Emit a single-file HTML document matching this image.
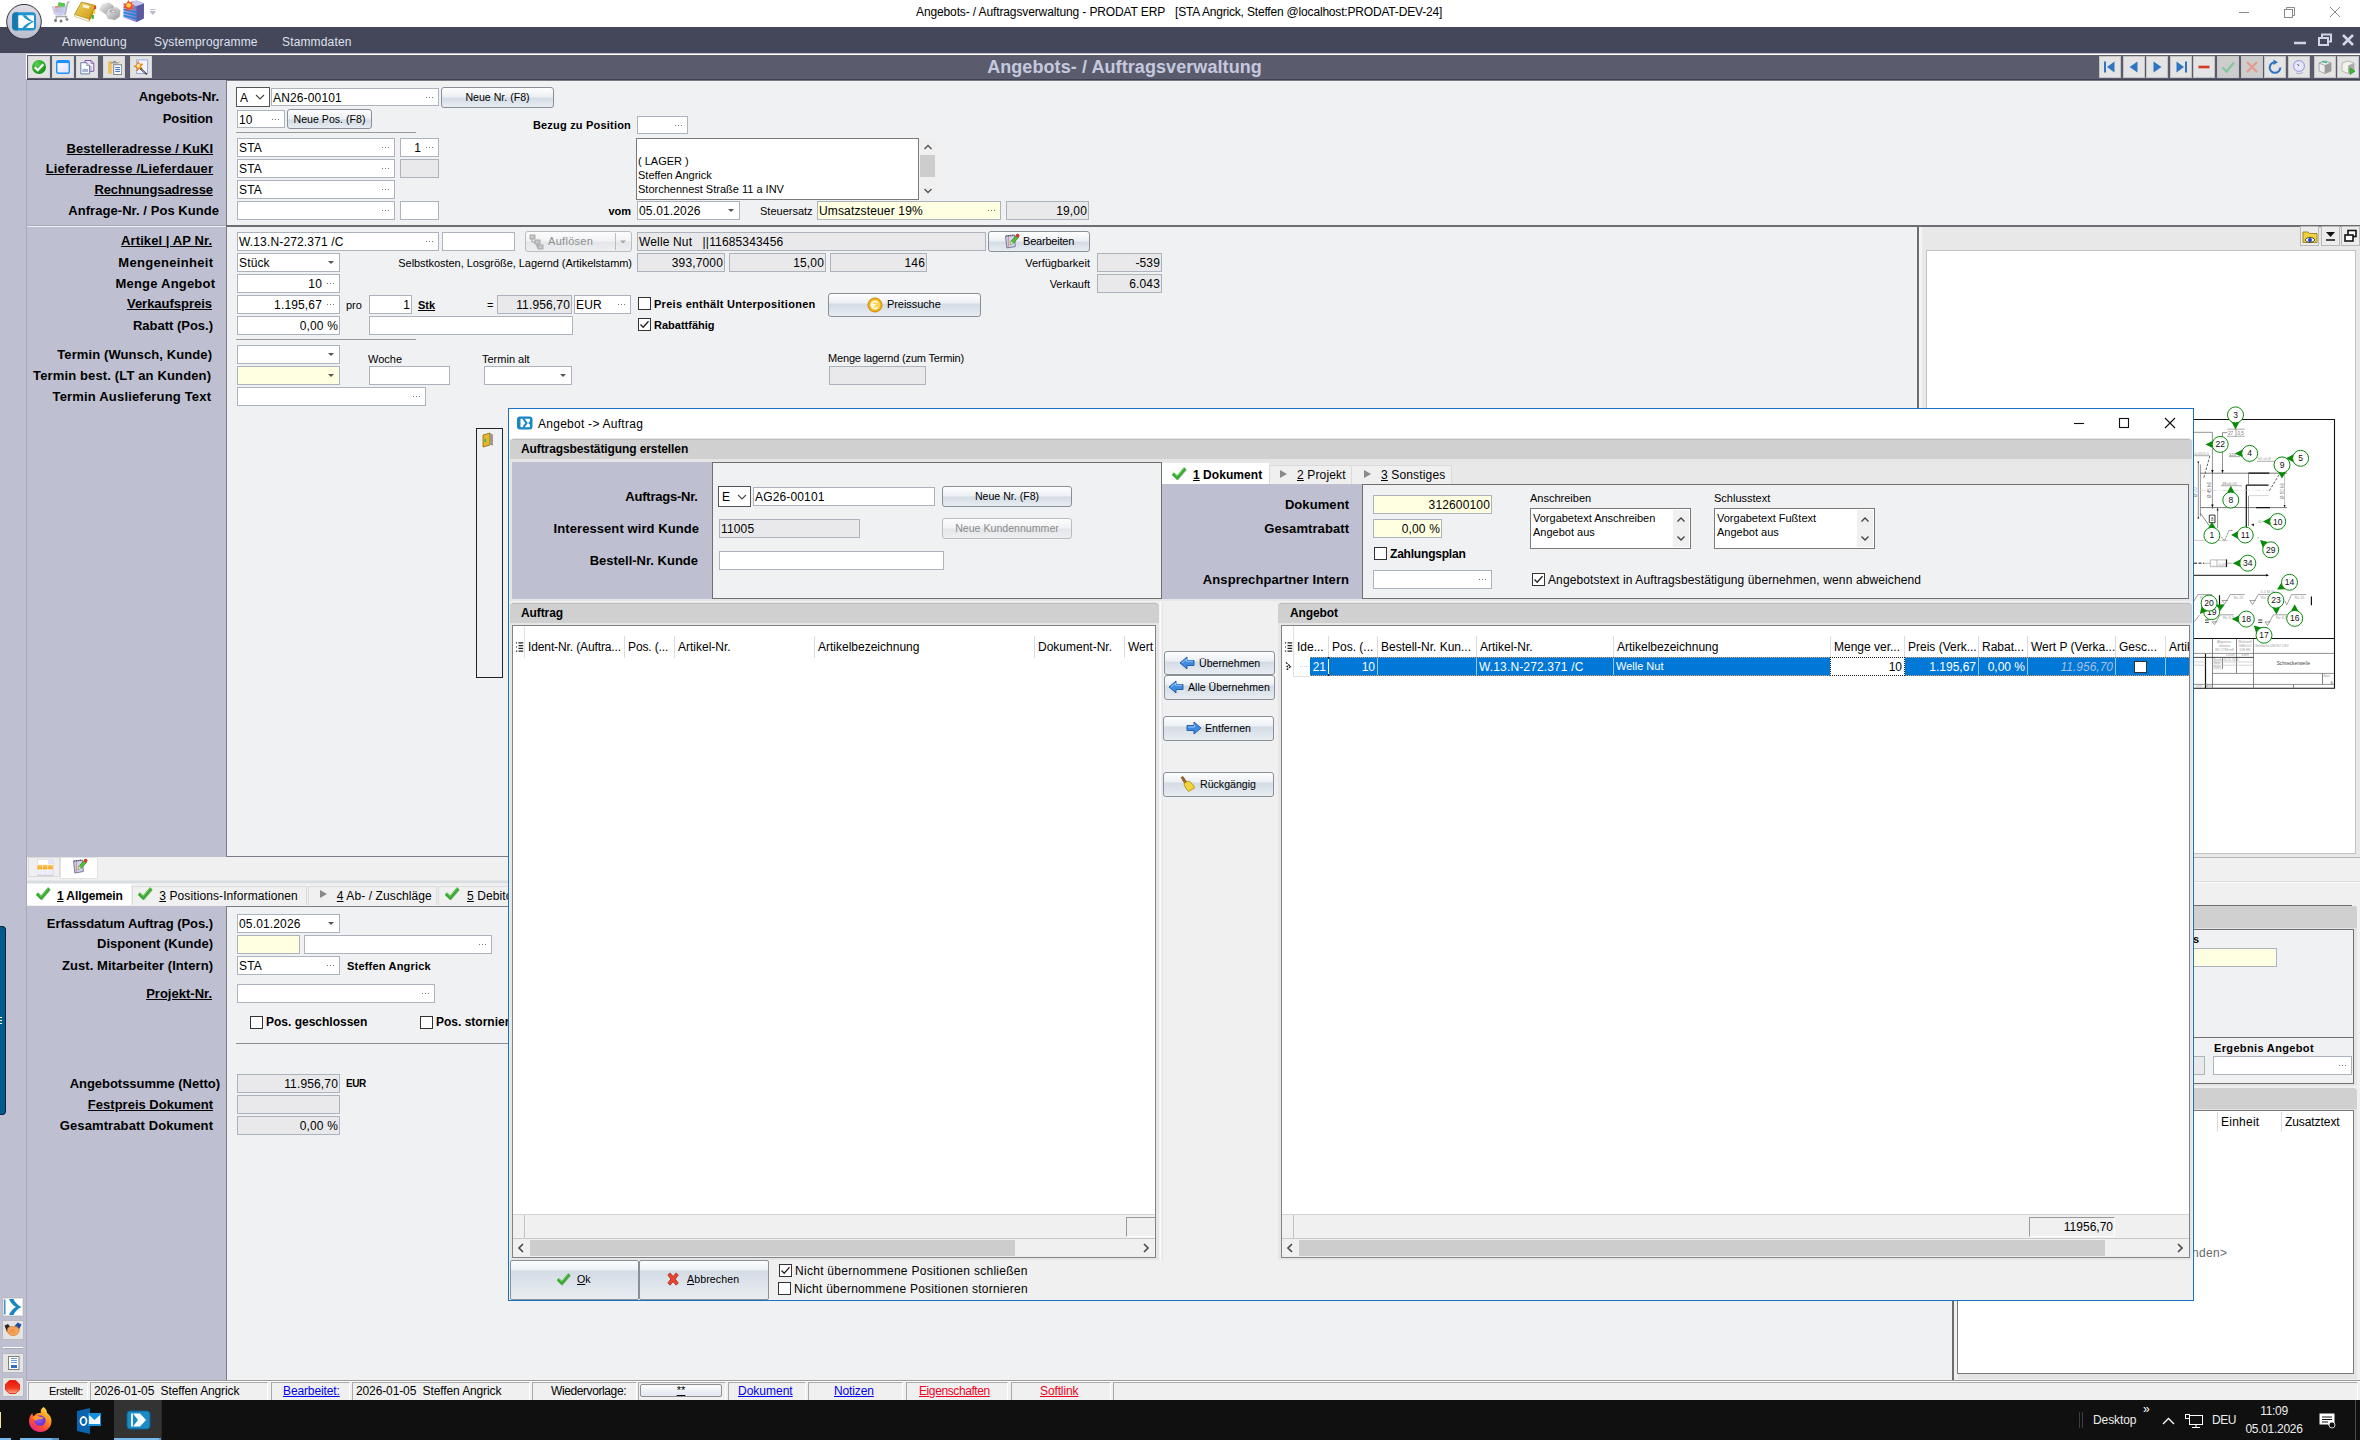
<!DOCTYPE html>
<html lang="de"><head><meta charset="utf-8"><title>Angebots- / Auftragsverwaltung - PRODAT ERP</title><style>
html,body{margin:0;padding:0;}
body{width:2360px;height:1440px;overflow:hidden;position:relative;background:#f0f1f3;font-family:"Liberation Sans",sans-serif;font-size:12px;color:#000;}
div{position:absolute;box-sizing:content-box;}
.btn{border:1px solid #8a9098;border-radius:3px;background:linear-gradient(#fdfefe 0px,#edf0f4 8.5px,#d4dce5 10.5px,#e9edf2 100%);text-align:center;white-space:nowrap;}
u{text-decoration:underline;}
</style></head><body>
<div style="left:0px;top:0px;width:2360px;height:27px;background:#fff"></div>
<div style="top:3px;height:18px;line-height:18px;font-size:12px;white-space:nowrap;left:916px;letter-spacing:-0.122px;">Angebots- / Auftragsverwaltung - PRODAT ERP</div>
<div style="top:3px;height:18px;line-height:18px;font-size:12px;white-space:nowrap;left:1175px;letter-spacing:-0.182px;">[STA Angrick, Steffen @localhost:PRODAT-DEV-24]</div>
<svg style="position:absolute;left:2230px;top:0px" width="120" height="27" viewBox="0 0 120 27"><g stroke="#8a8a8a" stroke-width="1" fill="none"><path d="M9 12.5h10"/><rect x="54.5" y="9.5" width="8" height="8"/><path d="M56.5 9.5v-2h8v8h-2"/><path d="M100 7l10 10M110 7l-10 10"/></g></svg>
<div style="left:0px;top:27px;width:2360px;height:26px;background:#44475a"></div>
<div style="top:33px;height:18px;line-height:18px;font-size:12px;white-space:nowrap;color:#dfe1ee;left:62px;letter-spacing:.15px;">Anwendung</div>
<div style="top:33px;height:18px;line-height:18px;font-size:12px;white-space:nowrap;color:#dfe1ee;left:154px;letter-spacing:.15px;">Systemprogramme</div>
<div style="top:33px;height:18px;line-height:18px;font-size:12px;white-space:nowrap;color:#dfe1ee;left:282px;letter-spacing:.15px;">Stammdaten</div>
<svg style="position:absolute;left:2290px;top:30px" width="70" height="20" viewBox="0 0 70 20"><g fill="none" stroke="#d0d4e8"><path d="M4 13h12" stroke-width="2.5"/><rect x="29" y="8" width="9" height="7" stroke-width="2"/><path d="M32 7v-2.500h9v7h-2" stroke-width="2"/><path d="M53 5l10 10M63 5l-10 10" stroke-width="2.6"/></g></svg>
<div style="left:0px;top:53px;width:2360px;height:2px;background:#bec0d1"></div>
<div style="left:0px;top:55px;width:27px;height:1345px;background:#bec0d1"></div>
<div style="left:26px;top:54px;width:2334px;height:1px;background:#fff"></div>
<div style="left:26px;top:54px;width:1px;height:25px;background:#fff"></div>
<div style="left:26px;top:80px;width:1px;height:1300px;background:#a6a7b8"></div>
<div style="left:27px;top:80px;width:199px;height:1px;background:#a9aab6"></div>
<div style="left:27px;top:55px;width:2333px;height:25px;background:#5a5c6e"></div>
<div style="left:27px;top:79px;width:2333px;height:1px;background:#3f4152"></div>
<div style="top:55px;height:24px;line-height:24px;font-size:18px;white-space:nowrap;font-weight:bold;color:#c6c9de;left:824.5px;width:600px;text-align:center;letter-spacing:.08px;">Angebots- / Auftragsverwaltung</div>
<svg style="position:absolute;left:4px;top:2px" width="42" height="42" viewBox="0 0 42 42"><defs><linearGradient id="lg1" x1="0" y1="0" x2="0" y2="1"><stop offset="0" stop-color="#dcdde6"/><stop offset="1" stop-color="#bcbdcc"/></linearGradient></defs><circle cx="20" cy="19.700" r="17.300" fill="url(#lg1)" stroke="#2e3040" stroke-width="1"/><rect x="8.200" y="10.200" width="23.800" height="18.300" rx="4" fill="#1d93cf"/><path d="M8.200 14.200v10.300a4 4 0 0 0 4 4h1.500v-18.300h-1.500a4 4 0 0 0-4 4z" fill="#1779ad"/><rect x="14.300" y="13.200" width="15.700" height="12.900" rx=".8" fill="#fff"/><path d="M18.300 13.200c2.500 3.200 5 5.200 9.600 6.500c-4.600 1.300-7.100 3.300-9.600 6.400h3.700c2-2.800 4.500-4.800 8-6.400c-3.500-1.600-6-3.600-8-6.500z" fill="#1d93cf"/></svg>
<svg style="position:absolute;left:50px;top:0px" width="110" height="27" viewBox="0 0 110 27"><defs>
<linearGradient id="gb" x1="0" y1="0" x2="1" y2="1"><stop offset="0" stop-color="#f3d55a"/><stop offset="1" stop-color="#c9960f"/></linearGradient>
<linearGradient id="gn" x1="0" y1="0" x2="1" y2="1"><stop offset="0" stop-color="#fafafa"/><stop offset="1" stop-color="#8f8f8f"/></linearGradient>
<linearGradient id="gc" x1="0" y1="0" x2="1" y2="0"><stop offset="0" stop-color="#a9a9e6"/><stop offset="1" stop-color="#5b5ba8"/></linearGradient>
</defs><g>
<path d="M19.500 1.500l-2 1.500-2.500 12" fill="none" stroke="#b9b9b9" stroke-width="1.600"/><path d="M5.500 16.500h12M7 16.500l-1.500 3.500M15 16.500l2 3" fill="none" stroke="#a8a8a8" stroke-width="1.300"/>
<rect x="8" y="2.500" width="7" height="5" rx="1" fill="#58c84c" transform="rotate(12 11 5)"/><rect x="5" y="6" width="5" height="6" fill="#f08a4a"/><rect x="8.500" y="6.500" width="5" height="6.500" fill="#9fd8c0" opacity=".9"/>
<path d="M2.300 6.500c4 1.500 10 1.500 14.500-1l-2 8.500c-3 1.500-7.500 1.500-10.500 0z" fill="#c4c4f2" opacity=".78" stroke="#a6a6d6" stroke-width=".6"/>
<circle cx="5.500" cy="20.500" r="1.500" fill="#777"/><circle cx="11" cy="21" r="1.500" fill="#777"/><circle cx="17" cy="19.500" r="1.400" fill="#888"/>
<path d="M24.500 14.500l7-12.500 14 3.500-6.500 14z" fill="url(#gb)" stroke="#a67c10" stroke-width=".7"/><path d="M24.500 14.500l.3 2 14.200 5 .5-2z" fill="#fff" stroke="#b89220" stroke-width=".5"/><path d="M39 19.500l6.500-14 .3 1.500-6.300 14.500z" fill="#b07f0c"/>
<rect x="33" y="5" width="6.500" height="3" fill="#fdf6d8" transform="rotate(14 36 6)"/><rect x="44" y="6" width="2.200" height="3.200" fill="#e9452c"/><rect x="43" y="10.500" width="2.200" height="3.200" fill="#f4d21f"/><rect x="41.500" y="15" width="2.400" height="3.800" fill="#3fb52f"/>
<path d="M49 10l3-6 7-1.500 5 3.500-1 6-6 3z" fill="url(#gn)"/><path d="M56 13.500l2.500-4.500 8-1.500 3.700 3-.7 6-4.500 3.300-7-1.300z" fill="url(#gn)" stroke="#a0a0a0" stroke-width=".4"/><ellipse cx="63" cy="11.300" rx="3.300" ry="1.700" fill="#9a9a9a"/><ellipse cx="63.300" cy="11.600" rx="2.300" ry="1" fill="#dcdcdc"/>
<path d="M73.500 4l13-3.500 7.500 3-.3 15-7.200 3.500-13-4.500z" fill="url(#gc)"/><path d="M86.500 22l7.200-3.500.3-15-7.500 2.500z" fill="#5a5aa0"/><path d="M73.500 4l13-3.500 7.500 3-7.500 2.500z" fill="#c9c9f0"/>
<path d="M73.500 9.500l13 2.700M73.500 12.500l13 3M73.500 15.500l13 3.300" stroke="#1f86e0" stroke-width="1.500" fill="none"/>
<path d="M78.500 0l1.300 2.500 2.700-1-.8 2.800 2.800.8-2.400 1.600 1.300 2.600-2.800-.5-.9 2.800-1.700-2.300-2.400 1.700.2-2.900-2.900-.3 2-2-1.700-2.300 2.900.2z" fill="#f2512a"/><circle cx="78.600" cy="5.300" r="2.300" fill="#ffd23e"/>
<path d="M100 9.500h5.500M100.300 11.500h5l-2.500 3z" stroke="#b9bad0" fill="#b9bad0" stroke-width="1"/>
</g></svg>
<div style="left:28px;top:56px;width:22px;height:22px;background:#e2e2e2;border:1px solid #d6d6d6;box-sizing:border-box"></div>
<svg style="position:absolute;left:31px;top:59px" width="16" height="16" viewBox="0 0 16 16"><defs><radialGradient id="rg1" cx=".35" cy=".3" r=".8"><stop offset="0" stop-color="#58d052"/><stop offset="1" stop-color="#0c8a10"/></radialGradient></defs><circle cx="8" cy="8" r="7" fill="url(#rg1)"/><path d="M3.800 8.300l2.900 2.900 5.600-6" stroke="#fff" stroke-width="2.300" fill="none"/></svg>
<div style="left:52px;top:56px;width:22px;height:22px;background:#e2e2e2;border:1px solid #d6d6d6;box-sizing:border-box"></div>
<svg style="position:absolute;left:55px;top:59px" width="16" height="16" viewBox="0 0 16 16"><defs><linearGradient id="lgw" x1="0" y1="0" x2="1" y2="1"><stop offset="0" stop-color="#fff"/><stop offset="1" stop-color="#dcdcff"/></linearGradient></defs><rect x="1.700" y="1.700" width="12.600" height="12.600" rx="1.500" fill="url(#lgw)" stroke="#1e90ff" stroke-width="1.400"/><path d="M2 3h12" stroke="#1e90ff" stroke-width="2.200"/></svg>
<div style="left:76px;top:56px;width:22px;height:22px;background:#e2e2e2;border:1px solid #d6d6d6;box-sizing:border-box"></div>
<svg style="position:absolute;left:79px;top:59px" width="16" height="16" viewBox="0 0 16 16"><path d="M6 1.500h6l2.800 2.800v8h-8.800z" fill="#f2ecfa" stroke="#7a55b0" stroke-width="1"/><path d="M12 1.500v2.800h2.800" fill="none" stroke="#7a55b0" stroke-width=".8"/><path d="M12 7v5" stroke="#b8a0d8" stroke-width="1.200"/><path d="M1.800 3.700h6l2.800 2.800v8.400h-8.800z" fill="#fff" stroke="#6a7ca8" stroke-width="1"/><path d="M7.800 3.700v2.800h2.800" fill="#e4e9f4" stroke="#6a7ca8" stroke-width=".8"/><rect x="3.300" y="9.800" width="5.800" height="3.400" fill="#a9b6d6"/></svg>
<div style="left:103px;top:56px;width:22px;height:22px;background:#e2e2e2;border:1px solid #d6d6d6;box-sizing:border-box"></div>
<svg style="position:absolute;left:106px;top:59px" width="16" height="16" viewBox="0 0 16 16"><rect x="2.100" y="2.200" width="3.700" height="12.700" fill="#f0c060"/><rect x="13.200" y="2" width=".9" height="2" fill="#f0c060"/><path d="M4.500 4.500h8v-1.500h-2.300c0-1.700-3.400-1.700-3.400 0h-2.300z" fill="#9a9a9a"/><rect x="7.700" y="5.700" width="8" height="9.800" fill="#fff" stroke="#808080" stroke-width="1"/><path d="M9.300 8.600h4.800M9.300 10.600h4.800M9.300 12.600h4.800" stroke="#2f6fb5" stroke-width="1"/></svg>
<div style="left:130px;top:56px;width:22px;height:22px;background:#e2e2e2;border:1px solid #d6d6d6;box-sizing:border-box"></div>
<svg style="position:absolute;left:133px;top:59px" width="16" height="16" viewBox="0 0 16 16"><rect x="3.700" y=".9" width="10.900" height="13.700" fill="#f4f4ff" stroke="#8fa2e0" stroke-width=".9"/><path d="M5.200 2.200l1.500 3 3.300-.3-2.200 2.500 1.700 2.900-3.200-.9-2.200 2.500-.1-3.300-3.100-1.300 3.100-1.200z" fill="#f59a23" stroke="#d9730c" stroke-width=".6"/><circle cx="5.400" cy="6.800" r="1.700" fill="#ffe9a8"/><path d="M7.400 9.700l6.300 5.600" stroke="#222" stroke-width="1.700" stroke-dasharray="1 .5"/></svg>
<div style="left:2099px;top:56px;width:22px;height:22px;background:#e4e4e4;border:1px solid #c4c4c4;box-sizing:border-box"></div>
<svg style="position:absolute;left:2102px;top:59px" width="16" height="16" viewBox="0 0 16 16"><path d="M3 2.500v11" stroke="#2f74c0" stroke-width="2"/><path d="M12.500 2.500v11l-7.500-5.500z" fill="#2f74c0"/></svg>
<div style="left:2123px;top:56px;width:22px;height:22px;background:#e4e4e4;border:1px solid #c4c4c4;box-sizing:border-box"></div>
<svg style="position:absolute;left:2126px;top:59px" width="16" height="16" viewBox="0 0 16 16"><path d="M11.500 2.500v11l-8-5.500z" fill="#2f74c0"/></svg>
<div style="left:2146px;top:56px;width:22px;height:22px;background:#e4e4e4;border:1px solid #c4c4c4;box-sizing:border-box"></div>
<svg style="position:absolute;left:2149px;top:59px" width="16" height="16" viewBox="0 0 16 16"><path d="M4.500 2.500v11l8-5.500z" fill="#2f74c0"/></svg>
<div style="left:2170px;top:56px;width:22px;height:22px;background:#e4e4e4;border:1px solid #c4c4c4;box-sizing:border-box"></div>
<svg style="position:absolute;left:2173px;top:59px" width="16" height="16" viewBox="0 0 16 16"><path d="M13 2.500v11" stroke="#2f74c0" stroke-width="2"/><path d="M3.500 2.500v11l7.500-5.500z" fill="#2f74c0"/></svg>
<div style="left:2193px;top:56px;width:22px;height:22px;background:#e4e4e4;border:1px solid #c4c4c4;box-sizing:border-box"></div>
<svg style="position:absolute;left:2196px;top:59px" width="16" height="16" viewBox="0 0 16 16"><path d="M2.500 8h11" stroke="#d3391c" stroke-width="2.600"/></svg>
<div style="left:2217px;top:56px;width:22px;height:22px;background:#cdcdcd;border:1px solid #c4c4c4;box-sizing:border-box"></div>
<svg style="position:absolute;left:2220px;top:59px" width="16" height="16" viewBox="0 0 16 16"><path d="M2.500 8.500l4 4 7.500-9" stroke="#86c3a3" stroke-width="2.200" fill="none"/></svg>
<div style="left:2241px;top:56px;width:22px;height:22px;background:#cdcdcd;border:1px solid #c4c4c4;box-sizing:border-box"></div>
<svg style="position:absolute;left:2244px;top:59px" width="16" height="16" viewBox="0 0 16 16"><path d="M3 3l10 10M13 3l-10 10" stroke="#e59a8c" stroke-width="2.200" fill="none"/></svg>
<div style="left:2264px;top:56px;width:22px;height:22px;background:#e4e4e4;border:1px solid #c4c4c4;box-sizing:border-box"></div>
<svg style="position:absolute;left:2267px;top:59px" width="16" height="16" viewBox="0 0 16 16"><path d="M8 3.200a5.300 5.300 0 1 0 5.300 5.300" stroke="#2f74c0" stroke-width="2" fill="none"/><path d="M6.500 .5l4.500 2.800-4.500 2.800z" fill="#2f74c0"/></svg>
<div style="left:2288px;top:56px;width:22px;height:22px;background:#e4e4e4;border:1px solid #c4c4c4;box-sizing:border-box"></div>
<svg style="position:absolute;left:2291px;top:59px" width="16" height="16" viewBox="0 0 16 16"><circle cx="8" cy="7" r="5.500" fill="#e8e8fb" stroke="#a9a9e0" stroke-width="1.300"/><path d="M8 7l-1.500-2" stroke="#557" stroke-width="1"/><path d="M5 14c2 1 5 1 7-1" stroke="#a9a9e0" fill="none"/></svg>
<div style="left:2314px;top:56px;width:22px;height:22px;background:#e4e4e4;border:1px solid #c4c4c4;box-sizing:border-box"></div>
<svg style="position:absolute;left:2317px;top:59px" width="16" height="16" viewBox="0 0 16 16"><path d="M2 4l6-2 6 2v8l-6 2.500-6-2.500z" fill="#eee" stroke="#999" stroke-width=".8"/><path d="M8 6.500v8M2 4l6 2.500 6-2.500" stroke="#999" fill="none" stroke-width=".8"/><path d="M8 6.500l6-2.500v8l-6 2.500z" fill="#9a9a9a"/><path d="M5 2.500l5 1" stroke="#3b9" stroke-width="1.500"/></svg>
<div style="left:2337px;top:56px;width:22px;height:22px;background:#e4e4e4;border:1px solid #c4c4c4;box-sizing:border-box"></div>
<svg style="position:absolute;left:2340px;top:59px" width="16" height="16" viewBox="0 0 16 16"><path d="M2 4l6-2 6 2v8l-6 2.500-6-2.500z" fill="#f3f3e8" stroke="#aaa" stroke-width=".8"/><path d="M8 6.500l6-2.500v8l-6 2.500z" fill="#aaa"/><path d="M10 9v6.500l5-3.200z" fill="#3bbf2f" stroke="#1d8a1a" stroke-width=".6"/></svg>
<div style="left:27px;top:80px;width:200px;height:145px;background:#bec0d1"></div>
<div style="left:227px;top:80px;width:2133px;height:145px;background:#f0f1f3"></div>
<div style="left:226px;top:80px;width:1px;height:145px;background:#7b7b86"></div>
<div style="left:226px;top:80px;width:2134px;height:1px;background:#7b7b86"></div>
<div style="left:27px;top:225px;width:199px;height:1px;background:#a9aabd"></div>
<div style="left:226px;top:225px;width:2134px;height:2px;background:#6e6e72"></div>
<div style="top:86.5px;height:19px;line-height:19px;font-size:13px;white-space:nowrap;font-weight:bold;left:-381.13px;width:600px;text-align:right;letter-spacing:-0.13px;">Angebots-Nr.</div>
<div style="top:108.5px;height:19px;line-height:19px;font-size:13px;white-space:nowrap;font-weight:bold;left:-387.16px;width:600px;text-align:right;letter-spacing:-0.16px;">Position</div>
<div style="top:138.5px;height:19px;line-height:19px;font-size:13px;white-space:nowrap;font-weight:bold;left:-386.946px;width:600px;text-align:right;letter-spacing:0.054px;text-decoration:underline;">Bestelleradresse / KuKI</div>
<div style="top:158.5px;height:19px;line-height:19px;font-size:13px;white-space:nowrap;font-weight:bold;left:-386.81px;width:600px;text-align:right;letter-spacing:0.19px;text-decoration:underline;">Lieferadresse /Lieferdauer</div>
<div style="top:179.5px;height:19px;line-height:19px;font-size:13px;white-space:nowrap;font-weight:bold;left:-387.09px;width:600px;text-align:right;letter-spacing:-0.09px;text-decoration:underline;">Rechnungsadresse</div>
<div style="top:200.5px;height:19px;line-height:19px;font-size:13px;white-space:nowrap;font-weight:bold;left:-380.946px;width:600px;text-align:right;letter-spacing:0.054px;">Anfrage-Nr. / Pos Kunde</div>
<div style="left:236px;top:87px;width:32px;height:18px;background:#fff;border:1px solid #555;"><span style="position:absolute;left:3px;top:1px;line-height:18px;font-size:12px;color:#000;white-space:nowrap;letter-spacing:.15px">A</span></div>
<svg style="position:absolute;left:255px;top:93px" width="10" height="8" viewBox="0 0 10 8"><path d="M1 2l4 4 4-4" fill="none" stroke="#444" stroke-width="1.100"/></svg>
<div style="left:271px;top:88px;width:166px;height:16px;background:#fff;border:1px solid #adb3bd;"><span style="position:absolute;left:1px;top:1px;line-height:16px;font-size:12px;color:#000;white-space:nowrap;letter-spacing:.15px">AN26-00101</span><span style="position:absolute;right:5px;top:8px;width:7px;height:1px;background:repeating-linear-gradient(90deg,#777 0 1px,transparent 1px 3px)"></span></div>
<div class="btn" style="left:441px;top:87px;width:111px;height:19px;line-height:19px;font-size:10.6px;color:#000;">Neue Nr. (F8)</div>
<div style="left:237px;top:110px;width:46px;height:16px;background:#fff;border:1px solid #adb3bd;"><span style="position:absolute;left:1px;top:1px;line-height:16px;font-size:12px;color:#000;white-space:nowrap;letter-spacing:.15px">10</span><span style="position:absolute;right:5px;top:8px;width:7px;height:1px;background:repeating-linear-gradient(90deg,#777 0 1px,transparent 1px 3px)"></span></div>
<div class="btn" style="left:287px;top:109px;width:83px;height:18px;line-height:18px;font-size:10.6px;color:#000;">Neue Pos. (F8)</div>
<div style="left:236px;top:132px;width:180px;height:1px;background:#9a9a9a"></div>
<div style="left:237px;top:138px;width:156px;height:17px;background:#fff;border:1px solid #adb3bd;"><span style="position:absolute;left:1px;top:1px;line-height:17px;font-size:12px;color:#000;white-space:nowrap;letter-spacing:.15px">STA</span><span style="position:absolute;right:5px;top:8px;width:7px;height:1px;background:repeating-linear-gradient(90deg,#777 0 1px,transparent 1px 3px)"></span></div>
<div style="left:400px;top:138px;width:37px;height:17px;background:#fff;border:1px solid #adb3bd;"><span style="position:absolute;right:17px;top:1px;line-height:17px;font-size:12px;color:#000;white-space:nowrap;letter-spacing:.15px">1</span><span style="position:absolute;right:5px;top:8px;width:7px;height:1px;background:repeating-linear-gradient(90deg,#777 0 1px,transparent 1px 3px)"></span></div>
<div style="left:237px;top:159px;width:156px;height:17px;background:#fff;border:1px solid #adb3bd;"><span style="position:absolute;left:1px;top:1px;line-height:17px;font-size:12px;color:#000;white-space:nowrap;letter-spacing:.15px">STA</span><span style="position:absolute;right:5px;top:8px;width:7px;height:1px;background:repeating-linear-gradient(90deg,#777 0 1px,transparent 1px 3px)"></span></div>
<div style="left:400px;top:159px;width:37px;height:17px;background:#e9e9ec;border:1px solid #adb3bd;"></div>
<div style="left:237px;top:180px;width:156px;height:17px;background:#fff;border:1px solid #adb3bd;"><span style="position:absolute;left:1px;top:1px;line-height:17px;font-size:12px;color:#000;white-space:nowrap;letter-spacing:.15px">STA</span><span style="position:absolute;right:5px;top:8px;width:7px;height:1px;background:repeating-linear-gradient(90deg,#777 0 1px,transparent 1px 3px)"></span></div>
<div style="left:237px;top:201px;width:156px;height:17px;background:#fff;border:1px solid #adb3bd;"><span style="position:absolute;right:5px;top:8px;width:7px;height:1px;background:repeating-linear-gradient(90deg,#777 0 1px,transparent 1px 3px)"></span></div>
<div style="left:400px;top:201px;width:37px;height:17px;background:#fff;border:1px solid #adb3bd;"></div>
<div style="top:116.5px;height:17px;line-height:17px;font-size:11px;white-space:nowrap;font-weight:bold;left:31px;width:600px;text-align:right;letter-spacing:.2px;">Bezug zu Position</div>
<div style="left:637px;top:116px;width:49px;height:16px;background:#fff;border:1px solid #adb3bd;"><span style="position:absolute;right:5px;top:8px;width:7px;height:1px;background:repeating-linear-gradient(90deg,#777 0 1px,transparent 1px 3px)"></span></div>
<div style="left:636px;top:138px;width:283px;height:62px;background:#fff;border:1px solid #7a7a7a;box-sizing:border-box"></div>
<div style="top:152.5px;height:17px;line-height:17px;font-size:11px;white-space:nowrap;left:638px;">( LAGER )</div>
<div style="top:166.5px;height:17px;line-height:17px;font-size:11px;white-space:nowrap;left:638px;">Steffen Angrick</div>
<div style="top:180.5px;height:17px;line-height:17px;font-size:11px;white-space:nowrap;left:638px;">Storchennest Straße 11 a INV</div>
<div style="left:920px;top:139px;width:16px;height:60px;background:#f0f0f0"></div>
<svg style="position:absolute;left:920px;top:139px" width="16" height="60" viewBox="0 0 16 60"><path d="M4.500 10l3.500-3.500 3.500 3.500M4.500 50l3.500 3.500 3.500-3.500" fill="none" stroke="#555" stroke-width="1.400"/><rect x="0" y="16" width="15" height="22" fill="#cdcdcd"/></svg>
<div style="top:202.5px;height:17px;line-height:17px;font-size:11px;white-space:nowrap;font-weight:bold;left:31px;width:600px;text-align:right;">vom</div>
<div style="left:637px;top:201px;width:101px;height:17px;background:#fff;border:1px solid #adb3bd;"><span style="position:absolute;left:1px;top:1px;line-height:17px;font-size:12px;color:#000;white-space:nowrap;letter-spacing:.15px">05.01.2026</span><span style="position:absolute;right:5px;top:7px;border:3px solid transparent;border-top:3px solid #555;border-bottom:0;width:0;height:0"></span></div>
<div style="top:202.5px;height:17px;line-height:17px;font-size:11px;white-space:nowrap;left:760px;">Steuersatz</div>
<div style="left:817px;top:201px;width:182px;height:17px;background:#ffffe1;border:1px solid #adb3bd;"><span style="position:absolute;left:1px;top:1px;line-height:17px;font-size:12px;color:#000;white-space:nowrap;letter-spacing:.15px">Umsatzsteuer 19%</span><span style="position:absolute;right:5px;top:8px;width:7px;height:1px;background:repeating-linear-gradient(90deg,#777 0 1px,transparent 1px 3px)"></span></div>
<div style="left:1006px;top:201px;width:81px;height:17px;background:#e9e9ec;border:1px solid #adb3bd;"><span style="position:absolute;right:1px;top:1px;line-height:17px;font-size:12px;color:#000;white-space:nowrap;letter-spacing:.15px">19,00</span></div>
<div style="left:27px;top:227px;width:200px;height:630px;background:#bec0d1"></div>
<div style="left:227px;top:227px;width:1690px;height:630px;background:#f0f1f3"></div>
<div style="left:226px;top:227px;width:1px;height:630px;background:#7b7b86"></div>
<div style="left:226px;top:856px;width:1691px;height:1px;background:#7b7b86"></div>
<div style="left:1917px;top:227px;width:2px;height:630px;background:#6e6e72"></div>
<div style="top:230.5px;height:19px;line-height:19px;font-size:13px;white-space:nowrap;font-weight:bold;left:-387.914px;width:600px;text-align:right;letter-spacing:0.086px;text-decoration:underline;">Artikel | AP Nr.</div>
<div style="top:252.5px;height:19px;line-height:19px;font-size:13px;white-space:nowrap;font-weight:bold;left:-386.69px;width:600px;text-align:right;letter-spacing:0.31px;">Mengeneinheit</div>
<div style="top:273.5px;height:19px;line-height:19px;font-size:13px;white-space:nowrap;font-weight:bold;left:-384.79px;width:600px;text-align:right;letter-spacing:0.21px;">Menge Angebot</div>
<div style="top:293.5px;height:19px;line-height:19px;font-size:13px;white-space:nowrap;font-weight:bold;left:-388.02px;width:600px;text-align:right;letter-spacing:-0.02px;text-decoration:underline;">Verkaufspreis</div>
<div style="top:315.5px;height:19px;line-height:19px;font-size:13px;white-space:nowrap;font-weight:bold;left:-387.01px;width:600px;text-align:right;letter-spacing:-0.01px;">Rabatt (Pos.)</div>
<div style="top:344.5px;height:19px;line-height:19px;font-size:13px;white-space:nowrap;font-weight:bold;left:-387.9px;width:600px;text-align:right;letter-spacing:0.1px;">Termin (Wunsch, Kunde)</div>
<div style="top:365.5px;height:19px;line-height:19px;font-size:13px;white-space:nowrap;font-weight:bold;left:-388.86px;width:600px;text-align:right;letter-spacing:0.14px;">Termin best. (LT an Kunden)</div>
<div style="top:386.5px;height:19px;line-height:19px;font-size:13px;white-space:nowrap;font-weight:bold;left:-388.82px;width:600px;text-align:right;letter-spacing:0.18px;">Termin Auslieferung Text</div>
<div style="left:237px;top:232px;width:200px;height:17px;background:#fff;border:1px solid #adb3bd;"><span style="position:absolute;left:1px;top:1px;line-height:17px;font-size:12px;color:#000;white-space:nowrap;letter-spacing:.15px">W.13.N-272.371 /C</span><span style="position:absolute;right:5px;top:8px;width:7px;height:1px;background:repeating-linear-gradient(90deg,#777 0 1px,transparent 1px 3px)"></span></div>
<div style="left:442px;top:232px;width:71px;height:17px;background:#fff;border:1px solid #adb3bd;"></div>
<div class="btn" style="left:525px;top:231px;width:105px;height:19px;line-height:19px;font-size:10.6px;color:#8a8a8a;border-color:#bdbdc0;background:linear-gradient(#fcfcfd 0px,#f2f3f5 8.5px,#e4e6ea 10.5px,#eeeff1 100%);"></div>
<div style="left:615px;top:233px;width:1px;height:17px;background:#bdbdbd"></div>
<svg style="position:absolute;left:529px;top:234px" width="16" height="16" viewBox="0 0 16 16"><g fill="#c9c9c9" stroke="#9b9b9b" stroke-width=".8"><rect x="1" y="1" width="5" height="4"/><rect x="6" y="6" width="5" height="4"/><rect x="9" y="11" width="5" height="4"/></g><path d="M3 5v3h3M8 10v3h1" stroke="#9b9b9b" fill="none"/></svg>
<div style="top:232.5px;height:17px;line-height:17px;font-size:11px;white-space:nowrap;color:#8e8e8e;left:548px;letter-spacing:.3px;">Auflösen</div>
<svg style="position:absolute;left:619px;top:239px" width="8" height="6" viewBox="0 0 8 6"><path d="M1 1.500l3 3 3-3z" fill="#a5a5a5"/></svg>
<div style="left:637px;top:232px;width:347px;height:17px;background:#e9e9ec;border:1px solid #adb3bd;"><span style="position:absolute;left:1px;top:1px;line-height:17px;font-size:12px;color:#000;white-space:nowrap;letter-spacing:.15px">Welle Nut   ||11685343456</span></div>
<div class="btn" style="left:988px;top:231px;width:100px;height:19px;line-height:19px;font-size:10.6px;color:#000;"></div>
<svg style="position:absolute;left:1003px;top:233px" width="17" height="17" viewBox="0 0 17 17"><path d="M2.500 3l9-1 .8 11.500-8.500 1.500z" fill="#cdd3f2" stroke="#6c7086" stroke-width=".9"/><path d="M5.300 3v10.800" stroke="#e46a5a" stroke-width=".8"/><path d="M3.500 2.200l.2 1.600M5.500 2l.2 1.600M7.500 1.800l.2 1.600M9.500 1.600l.2 1.600" stroke="#555" stroke-width=".8"/><path d="M7 11.500l1-3.200 5.300-5.800 2.200 2-5.300 5.800z" fill="#55c23a" stroke="#2c7a20" stroke-width=".7"/><path d="M7 11.500l1-3.200 2.200 2z" fill="#f3e2b0"/><circle cx="14.600" cy="2.600" r="1.900" fill="#d8392b"/></svg>
<div style="top:232.5px;height:17px;line-height:17px;font-size:11px;white-space:nowrap;left:1023px;letter-spacing:-.2px;">Bearbeiten</div>
<div style="left:237px;top:253px;width:101px;height:17px;background:#fff;border:1px solid #adb3bd;"><span style="position:absolute;left:1px;top:1px;line-height:17px;font-size:12px;color:#000;white-space:nowrap;letter-spacing:.15px">Stück</span><span style="position:absolute;right:5px;top:7px;border:3px solid transparent;border-top:3px solid #555;border-bottom:0;width:0;height:0"></span></div>
<div style="top:254.5px;height:17px;line-height:17px;font-size:11px;white-space:nowrap;left:32px;width:600px;text-align:right;letter-spacing:-.05px;">Selbstkosten, Losgröße, Lagernd (Artikelstamm)</div>
<div style="left:637px;top:253px;width:86px;height:17px;background:#e9e9ec;border:1px solid #adb3bd;"><span style="position:absolute;right:1px;top:1px;line-height:17px;font-size:12px;color:#000;white-space:nowrap;letter-spacing:.15px">393,7000</span></div>
<div style="left:729px;top:253px;width:95px;height:17px;background:#e9e9ec;border:1px solid #adb3bd;"><span style="position:absolute;right:1px;top:1px;line-height:17px;font-size:12px;color:#000;white-space:nowrap;letter-spacing:.15px">15,00</span></div>
<div style="left:830px;top:253px;width:95px;height:17px;background:#e9e9ec;border:1px solid #adb3bd;"><span style="position:absolute;right:1px;top:1px;line-height:17px;font-size:12px;color:#000;white-space:nowrap;letter-spacing:.15px">146</span></div>
<div style="top:254.5px;height:17px;line-height:17px;font-size:11px;white-space:nowrap;left:490px;width:600px;text-align:right;">Verfügbarkeit</div>
<div style="left:1097px;top:253px;width:63px;height:17px;background:#e9e9ec;border:1px solid #adb3bd;"><span style="position:absolute;right:1px;top:1px;line-height:17px;font-size:12px;color:#000;white-space:nowrap;letter-spacing:.15px">-539</span></div>
<div style="top:275.5px;height:17px;line-height:17px;font-size:11px;white-space:nowrap;left:490px;width:600px;text-align:right;">Verkauft</div>
<div style="left:1097px;top:274px;width:63px;height:17px;background:#e9e9ec;border:1px solid #adb3bd;"><span style="position:absolute;right:1px;top:1px;line-height:17px;font-size:12px;color:#000;white-space:nowrap;letter-spacing:.15px">6.043</span></div>
<div style="left:237px;top:274px;width:101px;height:17px;background:#fff;border:1px solid #adb3bd;"><span style="position:absolute;right:17px;top:1px;line-height:17px;font-size:12px;color:#000;white-space:nowrap;letter-spacing:.15px">10</span><span style="position:absolute;right:5px;top:8px;width:7px;height:1px;background:repeating-linear-gradient(90deg,#777 0 1px,transparent 1px 3px)"></span></div>
<div style="left:237px;top:295px;width:101px;height:17px;background:#fff;border:1px solid #adb3bd;"><span style="position:absolute;right:17px;top:1px;line-height:17px;font-size:12px;color:#000;white-space:nowrap;letter-spacing:.15px">1.195,67</span><span style="position:absolute;right:5px;top:8px;width:7px;height:1px;background:repeating-linear-gradient(90deg,#777 0 1px,transparent 1px 3px)"></span></div>
<div style="top:296.5px;height:17px;line-height:17px;font-size:11px;white-space:nowrap;left:346px;">pro</div>
<div style="left:369px;top:295px;width:41px;height:17px;background:#fff;border:1px solid #adb3bd;"><span style="position:absolute;right:1px;top:1px;line-height:17px;font-size:12px;color:#000;white-space:nowrap;letter-spacing:.15px">1</span></div>
<div style="top:296.5px;height:17px;line-height:17px;font-size:11px;white-space:nowrap;font-weight:bold;left:418px;text-decoration:underline;">Stk</div>
<div style="top:296.5px;height:17px;line-height:17px;font-size:11px;white-space:nowrap;left:487px;">=</div>
<div style="left:497px;top:295px;width:73px;height:17px;background:#e9e9ec;border:1px solid #adb3bd;"><span style="position:absolute;right:1px;top:1px;line-height:17px;font-size:12px;color:#000;white-space:nowrap;letter-spacing:.15px">11.956,70</span></div>
<div style="left:574px;top:295px;width:55px;height:17px;background:#fff;border:1px solid #adb3bd;"><span style="position:absolute;left:1px;top:1px;line-height:17px;font-size:12px;color:#000;white-space:nowrap;letter-spacing:.15px">EUR</span><span style="position:absolute;right:5px;top:8px;width:7px;height:1px;background:repeating-linear-gradient(90deg,#777 0 1px,transparent 1px 3px)"></span></div>
<div style="left:638px;top:297px;width:11px;height:11px;background:#fff;border:1px solid #333;"></div>
<div style="top:295.5px;height:17px;line-height:17px;font-size:11px;white-space:nowrap;font-weight:bold;left:654px;letter-spacing:.28px;">Preis enthält Unterpositionen</div>
<div class="btn" style="left:828px;top:293px;width:151px;height:22px;line-height:22px;font-size:10.6px;color:#000;"></div>
<svg style="position:absolute;left:867px;top:297px" width="16" height="16" viewBox="0 0 16 16"><circle cx="8" cy="8" r="7" fill="#f2b21b" stroke="#c98a07"/><circle cx="8" cy="8" r="5" fill="#ffd65a"/><path d="M10.500 5.500a3.500 3.500 0 1 0 0 5M4.500 7.500h4M4.500 9h4" stroke="#fff" stroke-width="1.200" fill="none"/></svg>
<div style="top:295.5px;height:17px;line-height:17px;font-size:11px;white-space:nowrap;left:887px;letter-spacing:-.07px;">Preissuche</div>
<div style="left:237px;top:316px;width:101px;height:17px;background:#fff;border:1px solid #adb3bd;"><span style="position:absolute;right:1px;top:1px;line-height:17px;font-size:12px;color:#000;white-space:nowrap;letter-spacing:.15px">0,00 %</span></div>
<div style="left:369px;top:316px;width:202px;height:17px;background:#fff;border:1px solid #adb3bd;"></div>
<div style="left:638px;top:318px;width:11px;height:11px;background:#fff;border:1px solid #333;"><svg width="11" height="11" viewBox="0 0 11 11" style="position:absolute;left:0;top:0"><path d="M1.5 5.5 L4.2 8.3 L9.5 2.2" fill="none" stroke="#222" stroke-width="1.3"/></svg></div>
<div style="top:316.5px;height:17px;line-height:17px;font-size:11px;white-space:nowrap;font-weight:bold;left:654px;">Rabattfähig</div>
<div style="left:236px;top:339px;width:180px;height:1px;background:#9a9a9a"></div>
<div style="left:237px;top:345px;width:101px;height:17px;background:#fff;border:1px solid #adb3bd;"><span style="position:absolute;right:5px;top:7px;border:3px solid transparent;border-top:3px solid #555;border-bottom:0;width:0;height:0"></span></div>
<div style="left:237px;top:366px;width:101px;height:17px;background:#ffffe1;border:1px solid #adb3bd;"><span style="position:absolute;right:5px;top:7px;border:3px solid transparent;border-top:3px solid #555;border-bottom:0;width:0;height:0"></span></div>
<div style="top:350.5px;height:17px;line-height:17px;font-size:11px;white-space:nowrap;left:368px;">Woche</div>
<div style="left:369px;top:366px;width:79px;height:17px;background:#fff;border:1px solid #adb3bd;"></div>
<div style="top:350.5px;height:17px;line-height:17px;font-size:11px;white-space:nowrap;left:482px;">Termin alt</div>
<div style="left:484px;top:366px;width:86px;height:17px;background:#fff;border:1px solid #adb3bd;"><span style="position:absolute;right:5px;top:7px;border:3px solid transparent;border-top:3px solid #555;border-bottom:0;width:0;height:0"></span></div>
<div style="top:349.5px;height:17px;line-height:17px;font-size:11px;white-space:nowrap;left:828px;letter-spacing:-.17px;">Menge lagernd (zum Termin)</div>
<div style="left:829px;top:366px;width:95px;height:17px;background:#e9e9ec;border:1px solid #adb3bd;"></div>
<div style="left:237px;top:387px;width:187px;height:17px;background:#fff;border:1px solid #adb3bd;"><span style="position:absolute;right:5px;top:8px;width:7px;height:1px;background:repeating-linear-gradient(90deg,#777 0 1px,transparent 1px 3px)"></span></div>
<div style="left:476px;top:428px;width:27px;height:250px;background:#f0f1f3;border:1px solid #222;box-sizing:border-box"></div>
<svg style="position:absolute;left:481px;top:432px" width="14" height="16" viewBox="0 0 14 16"><path d="M2 3l7-2v12l-7 2z" fill="#e3b62f" stroke="#8a6b10" stroke-width=".8"/><path d="M9 1l3 1.500v11l-3-.5z" fill="#9a9a9a"/><rect x="3.500" y="7" width="1.500" height="3" fill="#3b3"/></svg>
<div style="left:27px;top:857px;width:1890px;height:27px;background:#f0f0f0"></div>
<div style="left:27px;top:880px;width:1890px;height:4px;background:linear-gradient(#e9ebec,#d3d7da 55%,#f6f6f6)"></div>
<div style="left:28px;top:857px;width:32px;height:20px;background:#efefef;border:1px solid #dadada;box-sizing:border-box"></div>
<svg style="position:absolute;left:37px;top:859px" width="17" height="17" viewBox="0 0 17 17"><rect x=".5" y="1.300" width="15.700" height="15.200" fill="#8d8d8d" opacity=".6"/><rect x=".3" y=".5" width="15.700" height="15.200" fill="#fff" stroke="#d4d4e4" stroke-width=".6"/><rect x="11" y=".8" width="4.800" height="4.400" fill="#e4e4fb"/><defs><linearGradient id="og" x1="0" y1="0" x2="0" y2="1"><stop offset="0" stop-color="#ffcb66"/><stop offset="1" stop-color="#f89c14"/></linearGradient></defs><rect x=".5" y="5.600" width="15.300" height="5" fill="url(#og)"/><rect x=".5" y="11" width="15.300" height="4.500" fill="#ebebff"/><path d="M5.500 .5v15M10.700 .5v15M.5 5.400h15.300M.5 10.800h15.300" stroke="#fff" stroke-width=".6"/></svg>
<div style="left:60px;top:857px;width:38px;height:22px;background:#fff;border:1px solid #e2e2e2;box-sizing:border-box"></div>
<svg style="position:absolute;left:70.5px;top:858px" width="17" height="17" viewBox="0 0 17 17"><path d="M2.500 3l9-1 .8 11.500-8.500 1.500z" fill="#cdd3f2" stroke="#6c7086" stroke-width=".9"/><path d="M5.300 3v10.800" stroke="#e46a5a" stroke-width=".8"/><path d="M3.500 2.200l.2 1.600M5.500 2l.2 1.600M7.500 1.800l.2 1.600M9.500 1.600l.2 1.600" stroke="#555" stroke-width=".8"/><path d="M7 11.500l1-3.200 5.300-5.800 2.200 2-5.300 5.800z" fill="#55c23a" stroke="#2c7a20" stroke-width=".7"/><path d="M7 11.500l1-3.200 2.200 2z" fill="#f3e2b0"/><circle cx="14.600" cy="2.600" r="1.900" fill="#d8392b"/></svg>
<div style="left:27px;top:884px;width:1890px;height:22px;background:#f0f0f0"></div>
<div style="left:27px;top:884px;width:104px;height:21px;background:#fff"></div>
<svg style="position:absolute;left:34.5px;top:886px" width="16" height="14" viewBox="0 0 17 15"><path d="M2 8l4.500 4.500 8.500-10" fill="none" stroke="#1d7a18" stroke-width="3.600" transform="translate(.4,.6)" opacity=".55"/><path d="M2 8l4.500 4.500 8.500-10" fill="none" stroke="#35a82d" stroke-width="3.200"/><path d="M2.300 7l4.200 4.200 7.900-9.400" fill="none" stroke="#7fe06a" stroke-width="1" opacity=".9"/></svg>
<div style="top:886.5px;height:18px;line-height:18px;font-size:12px;white-space:nowrap;font-weight:bold;left:57px;letter-spacing:-.1px;"><u>1</u> Allgemein</div>
<div style="left:132px;top:886px;width:175px;height:19px;border:1px solid #dcdcdc;border-bottom:0;box-sizing:border-box;background:#f0f0f0"></div>
<svg style="position:absolute;left:136.5px;top:886px" width="16" height="14" viewBox="0 0 17 15"><path d="M2 8l4.500 4.500 8.500-10" fill="none" stroke="#1d7a18" stroke-width="3.600" transform="translate(.4,.6)" opacity=".55"/><path d="M2 8l4.500 4.500 8.500-10" fill="none" stroke="#35a82d" stroke-width="3.200"/><path d="M2.300 7l4.200 4.200 7.900-9.400" fill="none" stroke="#7fe06a" stroke-width="1" opacity=".9"/></svg>
<div style="top:886.5px;height:18px;line-height:18px;font-size:12px;white-space:nowrap;left:159.25px;letter-spacing:.1px;"><u>3</u> Positions-Informationen</div>
<div style="left:308px;top:886px;width:129px;height:19px;border:1px solid #dcdcdc;border-bottom:0;box-sizing:border-box;background:#f0f0f0"></div>
<svg style="position:absolute;left:320px;top:890px" width="8" height="9" viewBox="0 0 8 9"><path d="M0 0v8l7-4z" fill="#8a8a8a"/></svg>
<div style="top:886.5px;height:18px;line-height:18px;font-size:12px;white-space:nowrap;left:336.75px;letter-spacing:.1px;"><u>4</u> Ab- / Zuschläge</div>
<div style="left:438px;top:886px;width:122px;height:19px;border:1px solid #dcdcdc;border-bottom:0;box-sizing:border-box;background:#f0f0f0"></div>
<svg style="position:absolute;left:444.0px;top:886px" width="16" height="14" viewBox="0 0 17 15"><path d="M2 8l4.500 4.500 8.500-10" fill="none" stroke="#1d7a18" stroke-width="3.600" transform="translate(.4,.6)" opacity=".55"/><path d="M2 8l4.500 4.500 8.500-10" fill="none" stroke="#35a82d" stroke-width="3.200"/><path d="M2.300 7l4.200 4.200 7.900-9.400" fill="none" stroke="#7fe06a" stroke-width="1" opacity=".9"/></svg>
<div style="top:886.5px;height:18px;line-height:18px;font-size:12px;white-space:nowrap;left:467px;letter-spacing:.1px;"><u>5</u> Debitor</div>
<div style="left:27px;top:906px;width:200px;height:474px;background:#bec0d1"></div>
<div style="left:227px;top:906px;width:1726px;height:474px;background:#f0f1f3"></div>
<div style="left:226px;top:906px;width:1px;height:474px;background:#7b7b86"></div>
<div style="left:226px;top:906px;width:1727px;height:1px;background:#7b7b86"></div>
<div style="left:1952px;top:906px;width:2px;height:474px;background:#6e6e72"></div>
<div style="top:913.5px;height:19px;line-height:19px;font-size:13px;white-space:nowrap;font-weight:bold;left:-387.065px;width:600px;text-align:right;letter-spacing:-0.065px;">Erfassdatum Auftrag (Pos.)</div>
<div style="top:933.5px;height:19px;line-height:19px;font-size:13px;white-space:nowrap;font-weight:bold;left:-387.02px;width:600px;text-align:right;letter-spacing:-0.02px;">Disponent (Kunde)</div>
<div style="top:955.5px;height:19px;line-height:19px;font-size:13px;white-space:nowrap;font-weight:bold;left:-386.94px;width:600px;text-align:right;letter-spacing:0.06px;">Zust. Mitarbeiter (Intern)</div>
<div style="top:983.5px;height:19px;line-height:19px;font-size:13px;white-space:nowrap;font-weight:bold;left:-387.99px;width:600px;text-align:right;letter-spacing:0.01px;text-decoration:underline;">Projekt-Nr.</div>
<div style="top:1073.5px;height:19px;line-height:19px;font-size:13px;white-space:nowrap;font-weight:bold;left:-380.03px;width:600px;text-align:right;letter-spacing:-0.03px;">Angebotssumme (Netto)</div>
<div style="top:1094.5px;height:19px;line-height:19px;font-size:13px;white-space:nowrap;font-weight:bold;left:-386.99px;width:600px;text-align:right;letter-spacing:0.01px;text-decoration:underline;">Festpreis Dokument</div>
<div style="top:1115.5px;height:19px;line-height:19px;font-size:13px;white-space:nowrap;font-weight:bold;left:-386.885px;width:600px;text-align:right;letter-spacing:0.115px;">Gesamtrabatt Dokument</div>
<div style="left:237px;top:914px;width:101px;height:17px;background:#fff;border:1px solid #adb3bd;"><span style="position:absolute;left:1px;top:1px;line-height:17px;font-size:12px;color:#000;white-space:nowrap;letter-spacing:.15px">05.01.2026</span><span style="position:absolute;right:5px;top:7px;border:3px solid transparent;border-top:3px solid #555;border-bottom:0;width:0;height:0"></span></div>
<div style="left:237px;top:935px;width:61px;height:17px;background:#ffffe1;border:1px solid #adb3bd;"></div>
<div style="left:304px;top:935px;width:186px;height:17px;background:#fff;border:1px solid #adb3bd;"><span style="position:absolute;right:5px;top:8px;width:7px;height:1px;background:repeating-linear-gradient(90deg,#777 0 1px,transparent 1px 3px)"></span></div>
<div style="left:237px;top:956px;width:101px;height:17px;background:#fff;border:1px solid #adb3bd;"><span style="position:absolute;left:1px;top:1px;line-height:17px;font-size:12px;color:#000;white-space:nowrap;letter-spacing:.15px">STA</span><span style="position:absolute;right:5px;top:8px;width:7px;height:1px;background:repeating-linear-gradient(90deg,#777 0 1px,transparent 1px 3px)"></span></div>
<div style="top:957.5px;height:17px;line-height:17px;font-size:11px;white-space:nowrap;font-weight:bold;left:347px;letter-spacing:.2px;">Steffen Angrick</div>
<div style="left:237px;top:984px;width:196px;height:17px;background:#fff;border:1px solid #adb3bd;"><span style="position:absolute;right:5px;top:8px;width:7px;height:1px;background:repeating-linear-gradient(90deg,#777 0 1px,transparent 1px 3px)"></span></div>
<div style="left:250px;top:1016px;width:11px;height:11px;background:#fff;border:1px solid #333;"></div>
<div style="top:1013px;height:18px;line-height:18px;font-size:12px;white-space:nowrap;font-weight:bold;left:266px;">Pos. geschlossen</div>
<div style="left:420px;top:1016px;width:11px;height:11px;background:#fff;border:1px solid #333;"></div>
<div style="top:1013px;height:18px;line-height:18px;font-size:12px;white-space:nowrap;font-weight:bold;left:436px;">Pos. storniert</div>
<div style="left:236px;top:1043px;width:284px;height:1px;background:#8d8d8d"></div>
<div style="left:237px;top:1074px;width:101px;height:17px;background:#e9e9ec;border:1px solid #adb3bd;"><span style="position:absolute;right:1px;top:1px;line-height:17px;font-size:12px;color:#000;white-space:nowrap;letter-spacing:.15px">11.956,70</span></div>
<div style="top:1076px;height:16px;line-height:16px;font-size:10px;white-space:nowrap;font-weight:bold;left:346px;letter-spacing:-.4px;">EUR</div>
<div style="left:237px;top:1095px;width:101px;height:17px;background:#e9e9ec;border:1px solid #adb3bd;"></div>
<div style="left:237px;top:1116px;width:101px;height:17px;background:#e9e9ec;border:1px solid #adb3bd;"><span style="position:absolute;right:1px;top:1px;line-height:17px;font-size:12px;color:#000;white-space:nowrap;letter-spacing:.15px">0,00 %</span></div>
<div style="left:1919px;top:227px;width:441px;height:631px;background:#e8e8e8"></div>
<div style="left:1919px;top:227px;width:3px;height:631px;background:#f4f4f6"></div>
<div style="left:1926px;top:250px;width:430px;height:604px;background:#fff;border:1px solid #c2c2c6;box-sizing:border-box"></div>
<div style="left:1919px;top:857px;width:441px;height:1px;background:#b5b5b5"></div>
<div style="left:2300px;top:226px;width:19px;height:20px;background:#ececec;border:1px solid #b9b9b9;box-sizing:border-box"></div>
<div style="left:2321px;top:226px;width:19px;height:20px;background:#ececec;border:1px solid #b9b9b9;box-sizing:border-box"></div>
<div style="left:2341px;top:226px;width:19px;height:20px;background:#ececec;border:1px solid #b9b9b9;box-sizing:border-box"></div>
<svg style="position:absolute;left:2302px;top:228px" width="16" height="16" viewBox="0 0 16 16"><path d="M1 4h5l1.500 1.500h7.500v9h-14z" fill="#f2d23c" stroke="#8a7410" stroke-width=".8"/><path d="M3 12c2-3.500 8-3.500 10 0-2 3-8 3-10 0z" fill="#fff" stroke="#222" stroke-width=".8"/><circle cx="8" cy="12" r="2" fill="#1b3fd0"/></svg>
<svg style="position:absolute;left:2323px;top:228px" width="16" height="16" viewBox="0 0 16 16"><path d="M3 4h9l-4.500 5z" fill="#111"/><path d="M3 12h9" stroke="#111" stroke-width="1.500"/></svg>
<svg style="position:absolute;left:2343px;top:228px" width="16" height="16" viewBox="0 0 16 16"><rect x="5" y="2.500" width="8" height="6" fill="#fff" stroke="#111" stroke-width="1.600"/><rect x="2" y="7" width="8" height="6" fill="#fff" stroke="#111" stroke-width="1.600"/></svg>
<svg style="position:absolute;left:0;top:0" width="2360" height="700" viewBox="0 0 2360 700"><g fill="none" stroke="#444" stroke-width=".8"><path d="M2150 419.500H2334.500V688.300H2150" stroke="#111" stroke-width="1.100"/><path d="M2150 638.500H2334.500" stroke="#111" stroke-width="1.200"/><path d="M2212.500 638.500v50M2253.500 638.500v50M2236.500 638.500v34.500M2322.500 673.400v11M2222.500 657.800v11M2293.500 684.400v4" stroke="#666" stroke-width=".8"/><path d="M2205.500 653.400v35" stroke="#111" stroke-width="1.200"/><path d="M2194 653.400H2334M2212.500 673.400H2334M2194 684.400H2334" stroke="#777" stroke-width=".8"/><path d="M2194 657.400H2253.500" stroke="#333" stroke-width=".9"/><path d="M2194 662h11.500M2194 665.200h11.500M2212.500 662h41M2212.500 665.200h41M2212.500 668.800h10" stroke="#bbb" stroke-width=".6"/><path d="M2200.400 473.200H2287M2200.400 507.600H2287" stroke="#555"/><path d="M2248.300 473.200h21M2256 507.600h14M2246.300 485.200V527.400M2246.300 485.200H2268.600" stroke="#111" stroke-width="1.200"/><path d="M2200.400 464.400V516.500M2212.400 432.300V509M2194 432.300H2212.400M2222.500 432.600V473M2222.500 432.600h4.700M2248.500 473v12M2248.500 496v30M2217.600 507.600v20.500M2198.300 464v52" stroke="#666" stroke-width=".7"/><path d="M2248.500 495.600h20" stroke="#bbb" stroke-width=".6"/><path d="M2200 490.400H2270" stroke="#ccc" stroke-width=".6" stroke-dasharray="6 2 1 2"/><path d="M2209.800 456L2203.500 479M2279 474.800L2269.200 491" stroke="#333" stroke-width=".8" stroke-dasharray="2.500 1.500"/><path d="M2284.600 474v33.500" stroke="#999" stroke-width=".6"/><path d="M2227.200 429.200h17.500M2227.200 436.300h17.500M2236 429.200v7.100M2194 455.700h15.800M2229 456.600h11M2257 461.300h18M2221 485.700h21" stroke="#888" stroke-width=".7"/><path d="M2209.300 515.100h5.700v7.600h-5.700z" stroke="#222" stroke-width=".9"/><path d="M2200.400 513.300L2209.300 525.800" stroke="#555" stroke-width=".7"/><path d="M2194 540.400H2228.500" stroke="#bbb" stroke-width=".7"/><path d="M2221.300 536.800l3.100 4.100 4.600-10.400h4" stroke="#555" stroke-width=".7" stroke-dasharray="2 1"/><path d="M2212.400 507.500l-1.300-3h2.600zM2212.400 473l-1.300-3h2.600zM2222.500 473l-1.300-3h2.600zM2251 524.800l3-1.200v2.400zM2198.300 464l-1-2.500h2zM2198.300 516l-1 2.500h2zM2284.600 507.500l-1-2.500h2zM2217.600 508l-1 2.500h2z" fill="#111" stroke="none"/><path d="M2194 563.200h10" stroke="#111" stroke-width="1" stroke-dasharray="3 1.500"/><path d="M2204 563.200h6.300M2210.300 559.900h16.200v6.800h-16.200zM2217 559.900v6.800M2226.500 563.200h6" stroke="#999" stroke-width=".7"/><path d="M2226.500 559.500v7.600" stroke="#111" stroke-width="1.200"/><path d="M2194 575.300H2268" stroke="#111" stroke-width="1"/><path d="M2269 575.300l-3-1.200v2.400z" fill="#111" stroke="none"/><path d="M2194 601l3.800-6.400h14.100M2221.800 600.500h6.200M2221.800 600.500l3.100 3.100 5.200-9h14.600M2249.900 600.500h5.800M2249.900 600.500l2.600 4.200 5.700-10.100h15.100M2284.800 601l2.100 3.700 4.700-10.100h14.500" stroke="#777" stroke-width=".7"/><path d="M2219.500 595.300v9.900M2311.400 596.400v8.800" stroke="#111" stroke-width="1.200"/><path d="M2194.200 621.900l5.200-6.800M2211.900 621.900h5.400M2211.900 621.900l2.600 2.600 5.700-9.700h13.600M2265 621.900h5.400M2265 621.900l2.600 3.600 5.700-10.700h13.600" stroke="#777" stroke-width=".7"/><path d="M2205.100 620h3.700M2205.100 622.400h3.700M2258.200 620h4.200M2258.200 622.400h4.200" stroke="#222" stroke-width=".9"/></g><text x="2228" y="435" font-size="4.5" fill="#777" text-anchor="start" font-family="Liberation Sans, sans-serif">27</text><text x="2237.5" y="435" font-size="4.5" fill="#777" text-anchor="start" font-family="Liberation Sans, sans-serif">0,5</text><text x="2194.5" y="454.5" font-size="4" fill="#999" text-anchor="start" font-family="Liberation Sans, sans-serif">0,05/0,1</text><text x="2229" y="455.5" font-size="4.2" fill="#666" text-anchor="start" font-family="Liberation Sans, sans-serif">120</text><text x="2257.5" y="460" font-size="4" fill="#999" text-anchor="start" font-family="Liberation Sans, sans-serif">90 ±0,8</text><text x="2222" y="484.5" font-size="4.2" fill="#888" text-anchor="start" font-family="Liberation Sans, sans-serif">48±0,01</text><text x="2210.5" y="498" font-size="4.5" fill="#777" text-anchor="start" font-family="Liberation Sans, sans-serif" transform="rotate(-90 2210.5 498)">Ø 45 h6</text><text x="2197" y="497" font-size="4.5" fill="#777" text-anchor="start" font-family="Liberation Sans, sans-serif" transform="rotate(-90 2197 497)">Ø 70</text><text x="2284" y="499" font-size="4.5" fill="#888" text-anchor="start" font-family="Liberation Sans, sans-serif" transform="rotate(-90 2284 499)">Ø 50 h6</text><text x="2258" y="522.5" font-size="4" fill="#999" text-anchor="start" font-family="Liberation Sans, sans-serif">00</text><text x="2257.5" y="539" font-size="4" fill="#777" text-anchor="start" font-family="Liberation Sans, sans-serif">r</text><text x="2211" y="521" font-size="4.5" fill="#333" text-anchor="start" font-family="Liberation Sans, sans-serif">8</text><text x="2212" y="565.5" font-size="4" fill="#aaa" text-anchor="start" font-family="Liberation Sans, sans-serif">...</text><text x="2218.5" y="565.5" font-size="4" fill="#999" text-anchor="start" font-family="Liberation Sans, sans-serif">0,05</text><text x="2260.5" y="592.8" font-size="3.8" fill="#aaa" text-anchor="start" font-family="Liberation Sans, sans-serif">0,4 M-M</text><text x="2200" y="598.5" font-size="3.8" fill="#999" text-anchor="start" font-family="Liberation Sans, sans-serif">Rz 25</text><text x="2233.5" y="598.5" font-size="3.8" fill="#999" text-anchor="start" font-family="Liberation Sans, sans-serif">Rz 25</text><text x="2261" y="598.5" font-size="3.8" fill="#999" text-anchor="start" font-family="Liberation Sans, sans-serif">Rz 25</text><text x="2294.5" y="598.5" font-size="3.8" fill="#999" text-anchor="start" font-family="Liberation Sans, sans-serif">Rz 25</text><text x="2223" y="618.7" font-size="3.8" fill="#999" text-anchor="start" font-family="Liberation Sans, sans-serif">Rz 6,3</text><text x="2276" y="618.7" font-size="3.8" fill="#999" text-anchor="start" font-family="Liberation Sans, sans-serif">Rz 6,3</text><text x="2224.5" y="642.5" font-size="3.2" fill="#999" text-anchor="middle" font-family="Liberation Sans, sans-serif">Allgemein-</text><text x="2224.5" y="646.5" font-size="3.2" fill="#999" text-anchor="middle" font-family="Liberation Sans, sans-serif">toleranz</text><text x="2224.5" y="650.5" font-size="3.2" fill="#999" text-anchor="middle" font-family="Liberation Sans, sans-serif">ISO 2768-mK</text><text x="2245" y="642.5" font-size="3.2" fill="#999" text-anchor="middle" font-family="Liberation Sans, sans-serif">Werkstoff</text><text x="2245" y="646.5" font-size="3.2" fill="#999" text-anchor="middle" font-family="Liberation Sans, sans-serif">16MnCr5</text><text x="2245" y="650.5" font-size="3.2" fill="#999" text-anchor="middle" font-family="Liberation Sans, sans-serif">DIN EN</text><text x="2254.5" y="646.5" font-size="3" fill="#999" text-anchor="start" font-family="Liberation Sans, sans-serif">Oberfläche DIN ISO 1302</text><text x="2226" y="656.3" font-size="3" fill="#aaa" text-anchor="start" font-family="Liberation Sans, sans-serif">Datum</text><text x="2241" y="656.3" font-size="3" fill="#aaa" text-anchor="start" font-family="Liberation Sans, sans-serif">Name</text><text x="2213.5" y="660.8" font-size="3" fill="#999" text-anchor="start" font-family="Liberation Sans, sans-serif">Bearb.</text><text x="2223.5" y="660.8" font-size="3" fill="#999" text-anchor="start" font-family="Liberation Sans, sans-serif">05.01.2026</text><text x="2213.5" y="664.3" font-size="3" fill="#999" text-anchor="start" font-family="Liberation Sans, sans-serif">Gepr.</text><text x="2213.5" y="667.8" font-size="3" fill="#999" text-anchor="start" font-family="Liberation Sans, sans-serif">Norm</text><text x="2293.4" y="664.5" font-size="4.6" fill="#444" text-anchor="middle" font-family="Liberation Sans, sans-serif">Schneckenwelle</text><text x="2323.5" y="676.5" font-size="3" fill="#999" text-anchor="start" font-family="Liberation Sans, sans-serif">Blatt</text><text x="2330.5" y="683.5" font-size="3.5" fill="#777" text-anchor="start" font-family="Liberation Sans, sans-serif">A</text><text x="2196" y="687.3" font-size="3" fill="#999" text-anchor="start" font-family="Liberation Sans, sans-serif">Zust.</text><text x="2206" y="687" font-size="3" fill="#999" text-anchor="start" font-family="Liberation Sans, sans-serif">Änd.</text><path d="M2235.5 429.5L2231.3 421.4L2239.7 421.4z" fill="#0a8a0a"/><circle cx="2235.5" cy="414.9" r="8" fill="#fff" stroke="#0a8a0a" stroke-width="1"/><text x="2235.5" y="417.9" font-size="8.500" text-anchor="middle" fill="#111" font-family="Liberation Sans, sans-serif">3</text><path d="M2205.4 444.4L2213.7 440.2L2213.7 448.6z" fill="#0a8a0a"/><circle cx="2220.2" cy="444.4" r="8" fill="#fff" stroke="#0a8a0a" stroke-width="1"/><text x="2220.2" y="447.4" font-size="8.500" text-anchor="middle" fill="#111" font-family="Liberation Sans, sans-serif">22</text><path d="M2234.8 453.4L2243.2 449.2L2243.2 457.6z" fill="#0a8a0a"/><circle cx="2249.7" cy="453.4" r="8" fill="#fff" stroke="#0a8a0a" stroke-width="1"/><text x="2249.7" y="456.4" font-size="8.500" text-anchor="middle" fill="#111" font-family="Liberation Sans, sans-serif">4</text><path d="M2285.8 458.3L2294.1 454.1L2294.1 462.5z" fill="#0a8a0a"/><circle cx="2300.6" cy="458.3" r="8" fill="#fff" stroke="#0a8a0a" stroke-width="1"/><text x="2300.6" y="461.3" font-size="8.500" text-anchor="middle" fill="#111" font-family="Liberation Sans, sans-serif">5</text><path d="M2282.0 478.4L2277.8 471.4L2286.2 471.4z" fill="#0a8a0a"/><circle cx="2282.0" cy="464.9" r="8" fill="#fff" stroke="#0a8a0a" stroke-width="1"/><text x="2282.0" y="467.9" font-size="8.500" text-anchor="middle" fill="#111" font-family="Liberation Sans, sans-serif">9</text><path d="M2230.8 485.7L2235.0 493.6L2226.6 493.6z" fill="#0a8a0a"/><circle cx="2230.8" cy="500.1" r="8" fill="#fff" stroke="#0a8a0a" stroke-width="1"/><text x="2230.8" y="503.1" font-size="8.500" text-anchor="middle" fill="#111" font-family="Liberation Sans, sans-serif">8</text><path d="M2262.9 521.5L2271.2 517.3L2271.2 525.7z" fill="#0a8a0a"/><circle cx="2277.7" cy="521.5" r="8" fill="#fff" stroke="#0a8a0a" stroke-width="1"/><text x="2277.7" y="524.5" font-size="8.500" text-anchor="middle" fill="#111" font-family="Liberation Sans, sans-serif">10</text><path d="M2211.9 521.7L2216.1 528.9L2207.7 528.9z" fill="#0a8a0a"/><circle cx="2211.9" cy="535.4" r="8" fill="#fff" stroke="#0a8a0a" stroke-width="1"/><text x="2211.9" y="538.4" font-size="8.500" text-anchor="middle" fill="#111" font-family="Liberation Sans, sans-serif">1</text><path d="M2231.1 535.0L2238.7 530.8L2238.7 539.2z" fill="#0a8a0a"/><circle cx="2245.2" cy="535.0" r="8" fill="#fff" stroke="#0a8a0a" stroke-width="1"/><text x="2245.2" y="538.0" font-size="8.500" text-anchor="middle" fill="#111" font-family="Liberation Sans, sans-serif">11</text><path d="M2260.0 539.9L2268.8 542.3L2263.1 548.5z" fill="#0a8a0a"/><circle cx="2270.7" cy="549.8" r="8" fill="#fff" stroke="#0a8a0a" stroke-width="1"/><text x="2270.7" y="552.8" font-size="8.500" text-anchor="middle" fill="#111" font-family="Liberation Sans, sans-serif">29</text><path d="M2232.7 563.2L2241.3 559.0L2241.3 567.4z" fill="#0a8a0a"/><circle cx="2247.8" cy="563.2" r="8" fill="#fff" stroke="#0a8a0a" stroke-width="1"/><text x="2247.8" y="566.2" font-size="8.500" text-anchor="middle" fill="#111" font-family="Liberation Sans, sans-serif">34</text><path d="M2277.0 589.6L2281.8 582.0L2286.0 589.2z" fill="#0a8a0a"/><circle cx="2289.5" cy="582.3" r="8" fill="#fff" stroke="#0a8a0a" stroke-width="1"/><text x="2289.5" y="585.3" font-size="8.500" text-anchor="middle" fill="#111" font-family="Liberation Sans, sans-serif">14</text><path d="M2224.9 604.2L2219.4 612.1L2215.3 604.8z" fill="#0a8a0a"/><circle cx="2211.7" cy="611.7" r="8" fill="#fff" stroke="#0a8a0a" stroke-width="1"/><text x="2211.7" y="614.7" font-size="8.500" text-anchor="middle" fill="#111" font-family="Liberation Sans, sans-serif">19</text><path d="M2199.9 614.1L2201.7 605.4L2208.2 610.8z" fill="#0a8a0a"/><circle cx="2209.1" cy="603.1" r="8" fill="#fff" stroke="#0a8a0a" stroke-width="1"/><text x="2209.1" y="606.1" font-size="8.500" text-anchor="middle" fill="#111" font-family="Liberation Sans, sans-serif">20</text><path d="M2276.5 614.6L2272.0 606.9L2280.4 606.5z" fill="#0a8a0a"/><circle cx="2275.9" cy="600.2" r="8" fill="#fff" stroke="#0a8a0a" stroke-width="1"/><text x="2275.9" y="603.2" font-size="8.500" text-anchor="middle" fill="#111" font-family="Liberation Sans, sans-serif">23</text><path d="M2294.7 604.2L2298.9 611.9L2290.5 611.9z" fill="#0a8a0a"/><circle cx="2294.7" cy="618.4" r="8" fill="#fff" stroke="#0a8a0a" stroke-width="1"/><text x="2294.7" y="621.4" font-size="8.500" text-anchor="middle" fill="#111" font-family="Liberation Sans, sans-serif">16</text><path d="M2231.7 619.1L2239.8 614.9L2239.8 623.3z" fill="#0a8a0a"/><circle cx="2246.3" cy="619.1" r="8" fill="#fff" stroke="#0a8a0a" stroke-width="1"/><text x="2246.3" y="622.1" font-size="8.500" text-anchor="middle" fill="#111" font-family="Liberation Sans, sans-serif">18</text><path d="M2253.8 625.5L2262.2 627.7L2256.4 633.8z" fill="#0a8a0a"/><circle cx="2264.0" cy="635.2" r="8" fill="#fff" stroke="#0a8a0a" stroke-width="1"/><text x="2264.0" y="638.2" font-size="8.500" text-anchor="middle" fill="#111" font-family="Liberation Sans, sans-serif">17</text></svg>
<div style="left:1954px;top:858px;width:406px;height:522px;background:#f0f0f0"></div>
<div style="left:1954px;top:881px;width:406px;height:1px;background:#dadada"></div>
<div style="left:1954px;top:882px;width:406px;height:1px;background:#fbfbfb"></div>
<div style="left:1958px;top:906px;width:399px;height:180px;background:#e4e4e4;border-radius:4px 4px 0 0"></div>
<div style="left:1958px;top:906px;width:399px;height:22px;background:#d0d0d0;border-radius:2px 2px 0 0"></div>
<div style="left:1958px;top:905px;width:394px;height:1px;background:#6f6f6f"></div>
<div style="left:1960px;top:929px;width:394px;height:109px;background:#f0f1f3;border:1px solid #6f6f6f;box-sizing:border-box"></div>
<div style="top:931px;height:17px;line-height:17px;font-size:11px;white-space:nowrap;font-weight:bold;left:2193px;">s</div>
<div style="left:2100px;top:948px;width:175px;height:17px;background:#ffffe1;border:1px solid #adb3bd;"></div>
<div style="left:1960px;top:1038px;width:394px;height:46px;background:#f0f1f3;border:1px solid #6f6f6f;border-top:0;box-sizing:border-box"></div>
<div style="top:1039.5px;height:17px;line-height:17px;font-size:11px;white-space:nowrap;font-weight:bold;left:2214px;letter-spacing:.35px;">Ergebnis Angebot</div>
<div style="left:2100px;top:1056px;width:103px;height:17px;background:#e9e9ec;border:1px solid #adb3bd;"></div>
<div style="left:2213px;top:1056px;width:137px;height:17px;background:#fff;border:1px solid #adb3bd;"><span style="position:absolute;right:5px;top:8px;width:7px;height:1px;background:repeating-linear-gradient(90deg,#777 0 1px,transparent 1px 3px)"></span></div>
<div style="left:1958px;top:1088px;width:399px;height:291px;background:#e4e4e4;border-radius:4px 4px 0 0"></div>
<div style="left:1958px;top:1088px;width:399px;height:21px;background:#d0d0d0;border-radius:4px 4px 0 0"></div>
<div style="left:1957px;top:1110px;width:397px;height:264px;background:#fff;border:1px solid #7a7a7a;box-sizing:border-box"></div>
<div style="left:2217px;top:1112px;width:1px;height:20px;background:#dcdcdc"></div>
<div style="left:2281px;top:1112px;width:1px;height:20px;background:#dcdcdc"></div>
<div style="top:1113px;height:18px;line-height:18px;font-size:12px;white-space:nowrap;left:2221px;letter-spacing:.25px;">Einheit</div>
<div style="top:1113px;height:18px;line-height:18px;font-size:12px;white-space:nowrap;left:2285px;letter-spacing:-.08px;">Zusatztext</div>
<div style="top:1244px;height:18px;line-height:18px;font-size:12px;white-space:nowrap;color:#6a6a6a;left:2192px;letter-spacing:.3px;">nden&gt;</div>
<div style="left:0px;top:926px;width:6px;height:189px;background:#055a8c;border-radius:0 4px 4px 0;border:1px solid #06263a;border-left:0;box-sizing:border-box"></div>
<div style="left:0px;top:1017px;width:2px;height:1px;background:#fff"></div>
<div style="left:0px;top:1020px;width:2px;height:1px;background:#fff"></div>
<div style="left:0px;top:1023px;width:2px;height:1px;background:#fff"></div>
<div style="left:2px;top:1297px;width:22px;height:20px;background:#e4e4e4;border:1px solid #b9b9c0;box-sizing:border-box"></div>
<svg style="position:absolute;left:4px;top:1299px" width="18" height="16" viewBox="0 0 18 16"><rect x="0" y="0" width="18" height="16" fill="#fff"/><path d="M.8 .5v15" stroke="#1a86c0" stroke-width="1.300"/><path d="M5 0h4.500c1.500 3.500 4 6 8 8c-4 2-6.500 4.500-8 8h-4.500c1.500-3.500 3.500-6 7-8c-3.500-2-5.500-4.500-7-8z" fill="#1a86c0"/></svg>
<div style="left:2px;top:1320px;width:22px;height:20px;background:#e4e4e4;border:1px solid #b9b9c0;box-sizing:border-box"></div>
<svg style="position:absolute;left:4px;top:1322px" width="18" height="16" viewBox="0 0 18 16"><path d="M.5 3.500l3.500-1.500 3.500 4.500-4.500 3.500z" fill="#2a2a2a"/><path d="M17.500 2.500l-3.800-2-4 4.500 4.800 3.500z" fill="#1d4fa0"/><path d="M3.500 7c1-2.500 4-3 6-2 2-1 5 0 5.500 2.500.5 3-1.500 5.500-5 6-4 .5-7.500-2.500-6.500-6.500z" fill="#f5a45c" stroke="#d87a2c" stroke-width=".7"/><path d="M6 8.500c1.500-1 3.500-1 5 0M5.500 10.500c2-.8 4.500-.8 6 .3" stroke="#d87a2c" stroke-width=".6" fill="none"/></svg>
<div style="left:3px;top:1347px;width:20px;height:1px;background:#fff"></div>
<div style="left:4px;top:1348px;width:19px;height:1px;background:#a9aab8"></div>
<div style="left:2px;top:1353px;width:22px;height:20px;background:#e4e4e4;border:1px solid #b9b9c0;box-sizing:border-box"></div>
<svg style="position:absolute;left:4px;top:1355px" width="18" height="16" viewBox="0 0 18 16"><rect x="4.500" y="1.500" width="10.500" height="13" fill="#fff" stroke="#7d7d7d" stroke-width="1"/><path d="M6.500 3.500h6.500M6.500 5.500h6.500M6.500 7.500h6.500" stroke="#6a9ad6" stroke-width="1" shape-rendering="crispEdges"/><path d="M6.500 11h6.500" stroke="#2f6fc0" stroke-width="3" shape-rendering="crispEdges"/></svg>
<div style="left:2px;top:1376.5px;width:22px;height:20.0px;background:#e4e4e4;border:1px solid #b9b9c0;box-sizing:border-box"></div>
<svg style="position:absolute;left:4px;top:1378.5px" width="18" height="16" viewBox="0 0 18 16"><defs><linearGradient id="stp" x1="0" y1="0" x2="0" y2="1"><stop offset="0" stop-color="#ee1508"/><stop offset=".6" stop-color="#f03a20"/><stop offset="1" stop-color="#ffb08a"/></linearGradient></defs><path d="M5.300 1.500h6.400l3.800 3.800v5.400l-3.800 3.800h-6.400l-3.800-3.800v-5.400z" fill="url(#stp)" stroke="#e01000" stroke-width=".8"/></svg>
<div style="left:508px;top:408px;width:1686px;height:893px;background:#f0f0f0;border:1px solid #1a70c2;box-sizing:border-box"></div>
<div style="left:509px;top:409px;width:1684px;height:30px;background:#fff"></div>
<svg style="position:absolute;left:516px;top:415px" width="18" height="16" viewBox="0 0 18 16"><rect x="1" y="1.500" width="15.500" height="13" rx="3" fill="#1b87c2"/><rect x="4.500" y="3.800" width="9.500" height="8.400" fill="#fff"/><path d="M7.300 3.500l3.200 4.500-3.200 4.500" fill="none" stroke="#1b87c2" stroke-width="2.100"/><path d="M14.200 6l-2 2 2 2z" fill="#1b87c2"/></svg>
<div style="top:415px;height:18px;line-height:18px;font-size:12px;white-space:nowrap;left:538px;letter-spacing:.26px;">Angebot -&gt; Auftrag</div>
<svg style="position:absolute;left:2060px;top:410px" width="130" height="28" viewBox="0 0 130 28"><g stroke="#111" stroke-width="1.100" fill="none"><path d="M14 13.500h10"/><rect x="59.500" y="8.500" width="9" height="9"/><path d="M105 8l10 10M115 8l-10 10"/></g></svg>
<div style="left:510px;top:438px;width:1682px;height:163px;background:#e6e6e6;border-radius:5px 5px 0 0"></div>
<div style="left:510px;top:439px;width:1682px;height:20px;background:#d0d0d0;border-radius:4px 4px 0 0;border-top:1px solid #bdbdbd;box-sizing:border-box"></div>
<div style="top:440px;height:18px;line-height:18px;font-size:12px;white-space:nowrap;font-weight:bold;left:521px;letter-spacing:-.1px;">Auftragsbestätigung erstellen</div>
<div style="left:512px;top:462px;width:200px;height:137px;background:#bec0d1"></div>
<div style="left:712px;top:462px;width:450px;height:137px;background:#f0f1f3;border:1px solid #6f6f6f;box-sizing:border-box"></div>
<div style="top:486.5px;height:19px;line-height:19px;font-size:13px;white-space:nowrap;font-weight:bold;left:97.78px;width:600px;text-align:right;letter-spacing:-0.22px;">Auftrags-Nr.</div>
<div style="top:518.5px;height:19px;line-height:19px;font-size:13px;white-space:nowrap;font-weight:bold;left:99.08px;width:600px;text-align:right;letter-spacing:0.08px;">Interessent wird Kunde</div>
<div style="top:550.5px;height:19px;line-height:19px;font-size:13px;white-space:nowrap;font-weight:bold;left:98px;width:600px;text-align:right;letter-spacing:0px;">Bestell-Nr. Kunde</div>
<div style="left:718px;top:486px;width:31px;height:19px;background:#fff;border:1px solid #555;"><span style="position:absolute;left:3px;top:1px;line-height:19px;font-size:12px;color:#000;white-space:nowrap;letter-spacing:.15px">E</span></div>
<svg style="position:absolute;left:737px;top:493px" width="10" height="8" viewBox="0 0 10 8"><path d="M1 2l4 4 4-4" fill="none" stroke="#444" stroke-width="1.100"/></svg>
<div style="left:753px;top:487px;width:180px;height:17px;background:#fff;border:1px solid #adb3bd;"><span style="position:absolute;left:1px;top:1px;line-height:17px;font-size:12px;color:#000;white-space:nowrap;letter-spacing:.15px">AG26-00101</span></div>
<div class="btn" style="left:942px;top:486px;width:128px;height:19px;line-height:19px;font-size:10.6px;color:#000;">Neue Nr. (F8)</div>
<div style="left:719px;top:519px;width:139px;height:17px;background:#e9e9ec;border:1px solid #adb3bd;"><span style="position:absolute;left:1px;top:1px;line-height:17px;font-size:12px;color:#000;white-space:nowrap;letter-spacing:.15px">11005</span></div>
<div class="btn" style="left:942px;top:518px;width:128px;height:19px;line-height:19px;font-size:10.6px;color:#8a8a8a;border-color:#bdbdc0;background:linear-gradient(#fcfcfd 0px,#f2f3f5 8.5px,#e4e6ea 10.5px,#eeeff1 100%);">Neue Kundennummer</div>
<div style="left:719px;top:551px;width:223px;height:17px;background:#fff;border:1px solid #adb3bd;"></div>
<div style="left:1162px;top:462px;width:1028px;height:22px;background:#e8e8e8"></div>
<div style="left:1162px;top:463px;width:107px;height:21px;background:#fff"></div>
<svg style="position:absolute;left:1170.5px;top:466px" width="16" height="14" viewBox="0 0 17 15"><path d="M2 8l4.500 4.500 8.500-10" fill="none" stroke="#1d7a18" stroke-width="3.600" transform="translate(.4,.6)" opacity=".55"/><path d="M2 8l4.500 4.500 8.500-10" fill="none" stroke="#35a82d" stroke-width="3.200"/><path d="M2.300 7l4.200 4.200 7.900-9.400" fill="none" stroke="#7fe06a" stroke-width="1" opacity=".9"/></svg>
<div style="top:465.5px;height:18px;line-height:18px;font-size:12px;white-space:nowrap;font-weight:bold;left:1193px;letter-spacing:.05px;"><u>1</u> Dokument</div>
<div style="left:1269px;top:465px;width:83px;height:19px;border:1px solid #dadada;border-bottom:0;box-sizing:border-box;background:#efefef"></div>
<svg style="position:absolute;left:1280px;top:470px" width="8" height="9" viewBox="0 0 8 9"><path d="M0 0v8l7-4z" fill="#8a8a8a"/></svg>
<div style="top:465.5px;height:18px;line-height:18px;font-size:12px;white-space:nowrap;left:1297px;letter-spacing:.15px;"><u>2</u> Projekt</div>
<div style="left:1351px;top:465px;width:101px;height:19px;border:1px solid #dadada;border-bottom:0;box-sizing:border-box;background:#efefef"></div>
<svg style="position:absolute;left:1364px;top:470px" width="8" height="9" viewBox="0 0 8 9"><path d="M0 0v8l7-4z" fill="#8a8a8a"/></svg>
<div style="top:465.5px;height:18px;line-height:18px;font-size:12px;white-space:nowrap;left:1381px;letter-spacing:.15px;"><u>3</u> Sonstiges</div>
<div style="left:1162px;top:484px;width:200px;height:115px;background:#bec0d1"></div>
<div style="left:1362px;top:484px;width:827px;height:115px;background:#f0f1f3;border:1px solid #6f6f6f;box-sizing:border-box"></div>
<div style="top:494.5px;height:19px;line-height:19px;font-size:13px;white-space:nowrap;font-weight:bold;left:749.08px;width:600px;text-align:right;letter-spacing:0.08px;">Dokument</div>
<div style="top:518.5px;height:19px;line-height:19px;font-size:13px;white-space:nowrap;font-weight:bold;left:749.08px;width:600px;text-align:right;letter-spacing:0.08px;">Gesamtrabatt</div>
<div style="top:569.5px;height:19px;line-height:19px;font-size:13px;white-space:nowrap;font-weight:bold;left:749.08px;width:600px;text-align:right;letter-spacing:0.08px;">Ansprechpartner Intern</div>
<div style="left:1373px;top:495px;width:117px;height:17px;background:#ffffe1;border:1px solid #adb3bd;"><span style="position:absolute;right:1px;top:1px;line-height:17px;font-size:12px;color:#000;white-space:nowrap;letter-spacing:.15px">312600100</span></div>
<div style="left:1373px;top:519px;width:67px;height:17px;background:#ffffe1;border:1px solid #adb3bd;"><span style="position:absolute;right:1px;top:1px;line-height:17px;font-size:12px;color:#000;white-space:nowrap;letter-spacing:.15px">0,00 %</span></div>
<div style="left:1374px;top:547px;width:11px;height:11px;background:#fff;border:1px solid #333;"></div>
<div style="top:545px;height:18px;line-height:18px;font-size:12px;white-space:nowrap;font-weight:bold;left:1390px;letter-spacing:-.2px;">Zahlungsplan</div>
<div style="left:1373px;top:570px;width:117px;height:17px;background:#fff;border:1px solid #adb3bd;"><span style="position:absolute;right:5px;top:8px;width:7px;height:1px;background:repeating-linear-gradient(90deg,#777 0 1px,transparent 1px 3px)"></span></div>
<div style="top:489.5px;height:17px;line-height:17px;font-size:11px;white-space:nowrap;left:1530px;">Anschreiben</div>
<div style="top:489.5px;height:17px;line-height:17px;font-size:11px;white-space:nowrap;left:1714px;">Schlusstext</div>
<div style="left:1530px;top:508px;width:161px;height:41px;background:#fff;border:1px solid #7a7a7a;box-sizing:border-box"></div>
<div style="left:1673px;top:510px;width:16px;height:37px;background:#f0f0f0"></div>
<svg style="position:absolute;left:1673px;top:510px" width="16" height="37" viewBox="0 0 16 37"><path d="M4.500 11.500l3.500-3.500 3.500 3.500M4.500 26.500l3.500 3.500 3.500-3.500" fill="none" stroke="#444" stroke-width="1.400"/></svg>
<div style="left:1714px;top:508px;width:161px;height:41px;background:#fff;border:1px solid #7a7a7a;box-sizing:border-box"></div>
<div style="left:1857px;top:510px;width:16px;height:37px;background:#f0f0f0"></div>
<svg style="position:absolute;left:1857px;top:510px" width="16" height="37" viewBox="0 0 16 37"><path d="M4.500 11.500l3.500-3.500 3.500 3.500M4.500 26.500l3.500 3.500 3.500-3.500" fill="none" stroke="#444" stroke-width="1.400"/></svg>
<div style="top:509.5px;height:17px;line-height:17px;font-size:11px;white-space:nowrap;left:1533px;">Vorgabetext Anschreiben</div>
<div style="top:523.5px;height:17px;line-height:17px;font-size:11px;white-space:nowrap;left:1533px;">Angebot aus</div>
<div style="top:509.5px;height:17px;line-height:17px;font-size:11px;white-space:nowrap;left:1717px;">Vorgabetext Fußtext</div>
<div style="top:523.5px;height:17px;line-height:17px;font-size:11px;white-space:nowrap;left:1717px;">Angebot aus</div>
<div style="left:1532px;top:573px;width:11px;height:11px;background:#fff;border:1px solid #333;"><svg width="11" height="11" viewBox="0 0 11 11" style="position:absolute;left:0;top:0"><path d="M1.5 5.5 L4.2 8.3 L9.5 2.2" fill="none" stroke="#222" stroke-width="1.3"/></svg></div>
<div style="top:571px;height:18px;line-height:18px;font-size:12px;white-space:nowrap;left:1548px;letter-spacing:.12px;">Angebotstext in Auftragsbestätigung übernehmen, wenn abweichend</div>
<div style="left:510px;top:602px;width:649px;height:658px;background:#e6e6e6;border-radius:5px 5px 0 0"></div>
<div style="left:510px;top:603px;width:649px;height:20px;background:#d0d0d0;border-radius:4px 4px 0 0;border-top:1px solid #bdbdbd;box-sizing:border-box"></div>
<div style="top:604px;height:18px;line-height:18px;font-size:12px;white-space:nowrap;font-weight:bold;left:521px;letter-spacing:-.1px;">Auftrag</div>
<div style="left:512px;top:625px;width:644px;height:633px;background:#fff;border:1px solid #828282;box-sizing:border-box"></div>
<div style="left:524px;top:626px;width:1px;height:32px;background:#e0e0e0"></div>
<svg style="position:absolute;left:515px;top:641.5px" width="10" height="11" viewBox="0 0 10 11"><path d="M3.500 .9h4.700M3.500 3.600h4.700M3.500 6.400h4.700M3.500 9.100h4.700" stroke="#222" stroke-width="1.100"/><path d="M.9 .9h1.200M.9 5h1.200M.9 9.100h1.200" stroke="#222" stroke-width="1.200"/></svg>
<div style="left:624px;top:636px;width:1px;height:22px;background:#dcdcdc"></div>
<div style="left:674px;top:636px;width:1px;height:22px;background:#dcdcdc"></div>
<div style="left:814px;top:636px;width:1px;height:22px;background:#dcdcdc"></div>
<div style="left:1034px;top:636px;width:1px;height:22px;background:#dcdcdc"></div>
<div style="left:1124px;top:636px;width:1px;height:22px;background:#dcdcdc"></div>
<div style="left:513px;top:1214px;width:642px;height:25px;background:#f0f0f0;border-top:1px solid #d6d6d6;border-bottom:1px solid #c9c9c9;box-sizing:border-box"></div>
<div style="left:524px;top:1215px;width:1px;height:23px;background:#c4c4c4"></div>
<div style="left:513px;top:1239px;width:642px;height:18px;background:#f0f0f0"></div>
<svg style="position:absolute;left:515px;top:1242px" width="12" height="12" viewBox="0 0 12 12"><path d="M8 2l-4 4 4 4" fill="none" stroke="#4d4d4d" stroke-width="1.700"/></svg>
<svg style="position:absolute;left:1140px;top:1242px" width="12" height="12" viewBox="0 0 12 12"><path d="M4 2l4 4-4 4" fill="none" stroke="#4d4d4d" stroke-width="1.700"/></svg>
<div style="left:530px;top:1240px;width:485px;height:16px;background:#cdcdcd"></div>
<div style="top:638px;height:18px;line-height:18px;font-size:12px;white-space:nowrap;left:528px;letter-spacing:-.12px;">Ident-Nr. (Auftra...</div>
<div style="top:638px;height:18px;line-height:18px;font-size:12px;white-space:nowrap;left:628px;letter-spacing:-.12px;">Pos. (...</div>
<div style="top:638px;height:18px;line-height:18px;font-size:12px;white-space:nowrap;left:678px;">Artikel-Nr.</div>
<div style="top:638px;height:18px;line-height:18px;font-size:12px;white-space:nowrap;left:818px;">Artikelbezeichnung</div>
<div style="top:638px;height:18px;line-height:18px;font-size:12px;white-space:nowrap;left:1038px;">Dokument-Nr.</div>
<div style="top:638px;height:18px;line-height:18px;font-size:12px;white-space:nowrap;left:1128px;">Wert</div>
<div style="left:1126px;top:1217px;width:29px;height:20px;border:1px solid #9a9a9a;border-right:0;border-bottom-color:#fff;box-sizing:border-box"></div>
<div style="left:1159px;top:602px;width:4px;height:658px;background:linear-gradient(90deg,#f0f0f0,#fafafc 40%,#dfe0e6)"></div>
<div class="btn" style="left:1164px;top:651px;width:109px;height:22px;line-height:22px;font-size:10.6px;color:#000;"></div>
<svg style="position:absolute;left:1179px;top:655px" width="16" height="16" viewBox="0 0 16 16"><path d="M1 8l7-6v3.500h7v5h-7v3.500z" fill="#3f8be0" stroke="#1a56a8" stroke-width=".9"/><path d="M3 8l4.500-3.800v2h6.500" stroke="#9ccbff" fill="none"/></svg>
<div style="top:654.7px;height:16.6px;line-height:16.6px;font-size:10.6px;white-space:nowrap;left:1199px;">Übernehmen</div>
<div class="btn" style="left:1164px;top:675px;width:109px;height:23px;line-height:23px;font-size:10.6px;color:#000;"></div>
<svg style="position:absolute;left:1168px;top:679px" width="16" height="16" viewBox="0 0 16 16"><path d="M1 8l7-6v3.500h7v5h-7v3.500z" fill="#3f8be0" stroke="#1a56a8" stroke-width=".9"/><path d="M3 8l4.500-3.800v2h6.500" stroke="#9ccbff" fill="none"/></svg>
<div style="top:679.2px;height:16.6px;line-height:16.6px;font-size:10.6px;white-space:nowrap;left:1188px;">Alle Übernehmen</div>
<div class="btn" style="left:1163px;top:716px;width:109px;height:23px;line-height:23px;font-size:10.6px;color:#000;"></div>
<svg style="position:absolute;left:1186px;top:720px" width="16" height="16" viewBox="0 0 16 16"><path d="M15 8l-7-6v3.500h-7v5h7v3.500z" fill="#3f8be0" stroke="#1a56a8" stroke-width=".9"/><path d="M2 7h6.500v-2.500" stroke="#9ccbff" fill="none"/></svg>
<div style="top:720.2px;height:16.6px;line-height:16.6px;font-size:10.6px;white-space:nowrap;left:1205px;">Entfernen</div>
<div class="btn" style="left:1163px;top:772px;width:109px;height:23px;line-height:23px;font-size:10.6px;color:#000;"></div>
<svg style="position:absolute;left:1179px;top:776px" width="16" height="16" viewBox="0 0 16 16"><path d="M2 1.500l2-1 4 6-2 1.500z" fill="#a5662a" stroke="#6b3d12" stroke-width=".6"/><path d="M5 7.500l4-2.500c3 1 6 4 6.500 7l-6 3.500c-2-2-4-5-4.500-8z" fill="#f1d33a" stroke="#a8890f" stroke-width=".8"/></svg>
<div style="top:776.2px;height:16.6px;line-height:16.6px;font-size:10.6px;white-space:nowrap;left:1200px;">Rückgängig</div>
<div style="left:1278px;top:602px;width:914px;height:658px;background:#e6e6e6;border-radius:5px 5px 0 0"></div>
<div style="left:1278px;top:603px;width:914px;height:20px;background:#d0d0d0;border-radius:4px 4px 0 0;border-top:1px solid #bdbdbd;box-sizing:border-box"></div>
<div style="top:604px;height:18px;line-height:18px;font-size:12px;white-space:nowrap;font-weight:bold;left:1290px;letter-spacing:-.1px;">Angebot</div>
<div style="left:1281px;top:625px;width:909px;height:633px;background:#fff;border:1px solid #828282;box-sizing:border-box"></div>
<div style="left:1293px;top:626px;width:1px;height:32px;background:#e0e0e0"></div>
<svg style="position:absolute;left:1284px;top:641.5px" width="10" height="11" viewBox="0 0 10 11"><path d="M3.500 .9h4.700M3.500 3.600h4.700M3.500 6.400h4.700M3.500 9.100h4.700" stroke="#222" stroke-width="1.100"/><path d="M.9 .9h1.200M.9 5h1.200M.9 9.100h1.200" stroke="#222" stroke-width="1.200"/></svg>
<div style="left:1328px;top:636px;width:1px;height:22px;background:#dcdcdc"></div>
<div style="left:1377px;top:636px;width:1px;height:22px;background:#dcdcdc"></div>
<div style="left:1476px;top:636px;width:1px;height:22px;background:#dcdcdc"></div>
<div style="left:1613px;top:636px;width:1px;height:22px;background:#dcdcdc"></div>
<div style="left:1830px;top:636px;width:1px;height:22px;background:#dcdcdc"></div>
<div style="left:1904px;top:636px;width:1px;height:22px;background:#dcdcdc"></div>
<div style="left:1978px;top:636px;width:1px;height:22px;background:#dcdcdc"></div>
<div style="left:2027px;top:636px;width:1px;height:22px;background:#dcdcdc"></div>
<div style="left:2115px;top:636px;width:1px;height:22px;background:#dcdcdc"></div>
<div style="left:2165px;top:636px;width:1px;height:22px;background:#dcdcdc"></div>
<div style="left:1282px;top:1214px;width:907px;height:25px;background:#f0f0f0;border-top:1px solid #d6d6d6;border-bottom:1px solid #c9c9c9;box-sizing:border-box"></div>
<div style="left:1293px;top:1215px;width:1px;height:23px;background:#c4c4c4"></div>
<div style="left:1282px;top:1239px;width:907px;height:18px;background:#f0f0f0"></div>
<svg style="position:absolute;left:1284px;top:1242px" width="12" height="12" viewBox="0 0 12 12"><path d="M8 2l-4 4 4 4" fill="none" stroke="#4d4d4d" stroke-width="1.700"/></svg>
<svg style="position:absolute;left:2174px;top:1242px" width="12" height="12" viewBox="0 0 12 12"><path d="M4 2l4 4-4 4" fill="none" stroke="#4d4d4d" stroke-width="1.700"/></svg>
<div style="left:1299px;top:1240px;width:806px;height:16px;background:#cdcdcd"></div>
<div style="top:638px;height:18px;line-height:18px;font-size:12px;white-space:nowrap;left:1297px;">Ide...</div>
<div style="top:638px;height:18px;line-height:18px;font-size:12px;white-space:nowrap;left:1332px;">Pos. (...</div>
<div style="top:638px;height:18px;line-height:18px;font-size:12px;white-space:nowrap;left:1381px;">Bestell-Nr. Kun...</div>
<div style="top:638px;height:18px;line-height:18px;font-size:12px;white-space:nowrap;left:1480px;">Artikel-Nr.</div>
<div style="top:638px;height:18px;line-height:18px;font-size:12px;white-space:nowrap;left:1617px;">Artikelbezeichnung</div>
<div style="top:638px;height:18px;line-height:18px;font-size:12px;white-space:nowrap;left:1834px;">Menge ver...</div>
<div style="top:638px;height:18px;line-height:18px;font-size:12px;white-space:nowrap;left:1908px;">Preis (Verk...</div>
<div style="top:638px;height:18px;line-height:18px;font-size:12px;white-space:nowrap;left:1982px;">Rabat...</div>
<div style="top:638px;height:18px;line-height:18px;font-size:12px;white-space:nowrap;left:2031px;">Wert P (Verka...</div>
<div style="top:638px;height:18px;line-height:18px;font-size:12px;white-space:nowrap;left:2119px;">Gesc...</div>
<div style="top:638px;height:18px;line-height:18px;font-size:12px;white-space:nowrap;left:2169px;width:20px;overflow:hidden;">Artik</div>
<svg style="position:absolute;left:1283px;top:661px" width="10" height="11" viewBox="0 0 10 11"><path d="M3 1.500l4.500 4-4.500 4" fill="none" stroke="#111" stroke-width="1.200" stroke-dasharray="2 1"/><path d="M3.500 5.500h1.500" stroke="#111" stroke-width="1.300"/></svg>
<div style="left:1300px;top:666px;width:9px;height:1px;background:repeating-linear-gradient(90deg,#d4d4d4 0 1px,transparent 1px 2px)"></div>
<div style="left:1293px;top:658px;width:1px;height:18px;background:#e0e0e0"></div>
<div style="left:1293px;top:676px;width:17px;height:1px;background:#e0e0e0"></div>
<div style="left:1310px;top:657px;width:879px;height:19px;background:#0078d7;border-top:1px dotted #e8a060;border-bottom:1px dotted #e8a060;box-sizing:border-box"></div>
<div style="left:1328px;top:658px;width:1px;height:17px;background:#9cc4ec"></div>
<div style="left:1377px;top:658px;width:1px;height:17px;background:#9cc4ec"></div>
<div style="left:1476px;top:658px;width:1px;height:17px;background:#9cc4ec"></div>
<div style="left:1613px;top:658px;width:1px;height:17px;background:#9cc4ec"></div>
<div style="left:1830px;top:658px;width:1px;height:17px;background:#9cc4ec"></div>
<div style="left:1904px;top:658px;width:1px;height:17px;background:#9cc4ec"></div>
<div style="left:1978px;top:658px;width:1px;height:17px;background:#9cc4ec"></div>
<div style="left:2027px;top:658px;width:1px;height:17px;background:#9cc4ec"></div>
<div style="left:2115px;top:658px;width:1px;height:17px;background:#9cc4ec"></div>
<div style="left:2165px;top:658px;width:1px;height:17px;background:#9cc4ec"></div>
<div style="left:1328px;top:657px;width:1px;height:19px;background:#111"></div>
<div style="left:1328px;top:659px;width:1px;height:15px;background:#fff"></div>
<div style="left:1830px;top:657px;width:75px;height:19px;background:#fff;border:1px dotted #222;box-sizing:border-box"></div>
<div style="top:657.5px;height:18px;line-height:18px;font-size:12px;white-space:nowrap;color:#fff;left:726px;width:600px;text-align:right;">21</div>
<div style="top:657.5px;height:18px;line-height:18px;font-size:12px;white-space:nowrap;color:#fff;left:775px;width:600px;text-align:right;">10</div>
<div style="top:657.5px;height:18px;line-height:18px;font-size:12px;white-space:nowrap;color:#fff;left:1479px;letter-spacing:.14px;">W.13.N-272.371 /C</div>
<div style="top:657.5px;height:17px;line-height:17px;font-size:11px;white-space:nowrap;color:#fff;left:1616px;">Welle Nut</div>
<div style="top:657.5px;height:18px;line-height:18px;font-size:12px;white-space:nowrap;left:1302px;width:600px;text-align:right;">10</div>
<div style="top:657.5px;height:18px;line-height:18px;font-size:12px;white-space:nowrap;color:#fff;left:1376px;width:600px;text-align:right;">1.195,67</div>
<div style="top:657.5px;height:18px;line-height:18px;font-size:12px;white-space:nowrap;color:#fff;left:1425px;width:600px;text-align:right;">0,00 %</div>
<div style="top:657.5px;height:18px;line-height:18px;font-size:12px;white-space:nowrap;color:#a9bfe0;left:1513px;width:600px;text-align:right;font-style:italic;">11.956,70</div>
<div style="left:2134px;top:661px;width:13px;height:12px;background:#fff;border:1px solid #333;box-sizing:border-box"></div>
<div style="left:2029px;top:1217px;width:86px;height:20px;border:1px solid #9a9a9a;border-right-color:#fff;border-bottom-color:#fff;box-sizing:border-box"></div>
<div style="top:1218px;height:18px;line-height:18px;font-size:12px;white-space:nowrap;left:1513px;width:600px;text-align:right;">11956,70</div>
<div class="btn" style="left:510px;top:1260px;width:127px;height:38px;line-height:38px;font-size:10.6px;color:#000;border-radius:2px;"></div>
<svg style="position:absolute;left:556px;top:1272px" width="15" height="14" viewBox="0 0 17 16"><path d="M2 8l4.500 4.500 8.500-10" fill="none" stroke="#1d7a18" stroke-width="3.600" transform="translate(.4,.6)" opacity=".55"/><path d="M2 8l4.500 4.500 8.500-10" fill="none" stroke="#35a82d" stroke-width="3.200"/><path d="M2.300 7l4.200 4.200 7.900-9.400" fill="none" stroke="#7fe06a" stroke-width="1" opacity=".9"/></svg>
<div style="top:1270.7px;height:16.6px;line-height:16.6px;font-size:10.6px;white-space:nowrap;left:577px;letter-spacing:.1px;"><u>O</u>k</div>
<div class="btn" style="left:639px;top:1260px;width:128px;height:38px;line-height:38px;font-size:10.6px;color:#000;border-radius:2px;"></div>
<svg style="position:absolute;left:666px;top:1272px" width="15" height="14" viewBox="0 0 17 16"><path d="M2 3.500l2.500-2.500 3.500 4 3.500-4 2.500 2.500-3.500 4.500 3.500 4.500-2.500 2.500-3.500-4-3.500 4-2.500-2.500 3.500-4.500z" fill="#e8452c" stroke="#a3210f" stroke-width=".8"/></svg>
<div style="top:1270.7px;height:16.6px;line-height:16.6px;font-size:10.6px;white-space:nowrap;left:687px;letter-spacing:.1px;"><u>A</u>bbrechen</div>
<div style="left:779px;top:1264px;width:11px;height:11px;background:#fff;border:1px solid #333;"><svg width="11" height="11" viewBox="0 0 11 11" style="position:absolute;left:0;top:0"><path d="M1.5 5.5 L4.2 8.3 L9.5 2.2" fill="none" stroke="#222" stroke-width="1.3"/></svg></div>
<div style="top:1262px;height:18px;line-height:18px;font-size:12px;white-space:nowrap;left:795px;letter-spacing:.28px;">Nicht übernommene Positionen schließen</div>
<div style="left:778px;top:1282px;width:11px;height:11px;background:#fff;border:1px solid #333;"></div>
<div style="top:1280px;height:18px;line-height:18px;font-size:12px;white-space:nowrap;left:794px;letter-spacing:.25px;">Nicht übernommene Positionen stornieren</div>
<div style="left:27px;top:1380px;width:2333px;height:20px;background:#f0f0f0"></div>
<div style="left:27px;top:1380px;width:2333px;height:1px;background:#9b9b9b"></div>
<div style="left:27px;top:1381px;width:2333px;height:1px;background:#fff"></div>
<div style="left:28px;top:1382px;width:60px;height:18px;border:1px solid #a9a9a9;border-right-color:#fff;border-bottom:0;box-sizing:border-box"></div>
<div style="left:90px;top:1382px;width:178px;height:18px;border:1px solid #a9a9a9;border-right-color:#fff;border-bottom:0;box-sizing:border-box"></div>
<div style="left:271px;top:1382px;width:79px;height:18px;border:1px solid #a9a9a9;border-right-color:#fff;border-bottom:0;box-sizing:border-box"></div>
<div style="left:352px;top:1382px;width:178px;height:18px;border:1px solid #a9a9a9;border-right-color:#fff;border-bottom:0;box-sizing:border-box"></div>
<div style="left:532px;top:1382px;width:105px;height:18px;border:1px solid #a9a9a9;border-right-color:#fff;border-bottom:0;box-sizing:border-box"></div>
<div style="left:638px;top:1382px;width:88px;height:18px;border:1px solid #a9a9a9;border-right-color:#fff;border-bottom:0;box-sizing:border-box"></div>
<div style="left:728px;top:1382px;width:78px;height:18px;border:1px solid #a9a9a9;border-right-color:#fff;border-bottom:0;box-sizing:border-box"></div>
<div style="left:808px;top:1382px;width:95px;height:18px;border:1px solid #a9a9a9;border-right-color:#fff;border-bottom:0;box-sizing:border-box"></div>
<div style="left:906px;top:1382px;width:102px;height:18px;border:1px solid #a9a9a9;border-right-color:#fff;border-bottom:0;box-sizing:border-box"></div>
<div style="left:1011px;top:1382px;width:100px;height:18px;border:1px solid #a9a9a9;border-right-color:#fff;border-bottom:0;box-sizing:border-box"></div>
<div style="left:1113px;top:1382px;width:1245px;height:18px;border:1px solid #a9a9a9;border-right-color:#fff;border-bottom:0;box-sizing:border-box"></div>
<div style="top:1382.5px;height:17px;line-height:17px;font-size:11px;white-space:nowrap;left:49px;letter-spacing:-.3px;">Erstellt:</div>
<div style="top:1382px;height:18px;line-height:18px;font-size:12px;white-space:nowrap;left:94px;letter-spacing:-0.12px;">2026-01-05  Steffen Angrick</div>
<div style="top:1382px;height:18px;line-height:18px;font-size:12px;white-space:nowrap;color:#0000ee;left:283px;letter-spacing:-0.12px;text-decoration:underline;">Bearbeitet:</div>
<div style="top:1382px;height:18px;line-height:18px;font-size:12px;white-space:nowrap;left:356px;letter-spacing:-0.12px;">2026-01-05  Steffen Angrick</div>
<div style="top:1382px;height:18px;line-height:18px;font-size:12px;white-space:nowrap;left:551px;letter-spacing:-.4px;">Wiedervorlage:</div>
<div style="left:640px;top:1384px;width:82px;height:13px;border:1px solid #8f8f8f;border-radius:2px;background:linear-gradient(#fdfdfd,#eef1f6 50%,#e2e6ee);box-sizing:border-box"></div>
<div style="top:1381.5px;height:17px;line-height:17px;font-size:11px;white-space:nowrap;left:661px;width:40px;text-align:center;text-decoration:underline;">**</div>
<div style="top:1382px;height:18px;line-height:18px;font-size:12px;white-space:nowrap;color:#0000ee;left:738px;text-decoration:underline;">Dokument</div>
<div style="top:1382px;height:18px;line-height:18px;font-size:12px;white-space:nowrap;color:#0000ee;left:834px;letter-spacing:-0.12px;text-decoration:underline;">Notizen</div>
<div style="top:1382px;height:18px;line-height:18px;font-size:12px;white-space:nowrap;color:#ee0022;left:919px;letter-spacing:-.4px;text-decoration:underline;">Eigenschaften</div>
<div style="top:1382px;height:18px;line-height:18px;font-size:12px;white-space:nowrap;color:#ee0022;left:1040px;letter-spacing:-0.12px;text-decoration:underline;">Softlink</div>
<div style="left:0px;top:1400px;width:2360px;height:40px;background:#101010"></div>
<div style="left:114px;top:1400px;width:47px;height:40px;background:#333"></div>
<div style="left:161px;top:1400px;width:1px;height:40px;background:#2a2a2a"></div>
<div style="left:0px;top:1438px;width:11px;height:2px;background:#76b9ed"></div>
<div style="left:20px;top:1438px;width:32px;height:2px;background:#76b9ed"></div>
<div style="left:114px;top:1438px;width:45px;height:2px;background:#76b9ed"></div>
<div style="left:52px;top:1438px;width:7px;height:2px;background:#5b93c4"></div>
<div style="left:159px;top:1438px;width:2px;height:2px;background:#5b93c4"></div>
<div style="left:0px;top:1412px;width:1px;height:16px;background:#f7e392"></div>
<svg style="position:absolute;left:27px;top:1405px" width="28" height="30" viewBox="0 0 28 30"><defs><linearGradient id="ffg" x1=".8" y1="0" x2=".2" y2="1"><stop offset="0" stop-color="#ffe14a"/><stop offset=".35" stop-color="#ff9a1f"/><stop offset=".7" stop-color="#ff4a3a"/><stop offset="1" stop-color="#e0209a"/></linearGradient><radialGradient id="ffp" cx=".4" cy=".4" r=".7"><stop offset="0" stop-color="#9a5cf0"/><stop offset="1" stop-color="#5a2ad0"/></radialGradient></defs><path d="M16.500 2c2.500 1.500 3.500 4 3.500 6 2.500 1.500 4.500 4.500 4.500 8 0 6.300-5 11-11.300 11s-11.200-4.700-11.200-10.700c0-3.500 1.300-6.300 3.300-8.300 0 1.500.5 2.500 1.500 3.300 1.500-2.800 4-3.800 7.200-3.300-1-1.500 0-4.500 2.500-6z" fill="url(#ffg)"/><ellipse cx="13" cy="15.500" rx="5.600" ry="5.200" fill="url(#ffp)"/><path d="M6 12c2-1.500 4.500-1.500 6.500-.3 1.500 1 3.500.8 4.500-.2-.5 2-2.500 3-4.500 2.500-1.500-.3-3 .5-3.500 2-1.500-1-2.500-2.500-3-4z" fill="#ff9a2a"/></svg>
<svg style="position:absolute;left:75px;top:1407px" width="28" height="28" viewBox="0 0 28 28"><path d="M2 4l13-3v26l-13-3z" fill="#0a64ad"/><rect x="13" y="6" width="13" height="13" fill="#1490df"/><path d="M14 8l5.500 5 5.500-5v9h-11z" fill="#fff" opacity=".95"/><ellipse cx="8.500" cy="14" rx="3" ry="4" fill="none" stroke="#fff" stroke-width="1.800"/></svg>
<svg style="position:absolute;left:126px;top:1409px" width="26" height="24" viewBox="0 0 26 24"><rect x="1" y="2" width="23" height="18" rx="3" fill="#1c8cc8" stroke="#0d6290"/><path d="M7 4.500h7l6 6.500-6 6.500h-7l5-6.500z" fill="#fff"/><path d="M6 4.500v13" stroke="#fff" stroke-width="1.800"/></svg>
<div style="left:2079px;top:1412px;width:1px;height:16px;background:#3c3c3c"></div>
<div style="left:2082px;top:1412px;width:1px;height:16px;background:#3c3c3c"></div>
<div style="top:1411px;height:18px;line-height:18px;font-size:12px;white-space:nowrap;color:#ededed;left:2093px;letter-spacing:-.1px;">Desktop</div>
<div style="top:1400px;height:18px;line-height:18px;font-size:12px;white-space:nowrap;color:#fff;left:2143px;">»</div>
<svg style="position:absolute;left:2160px;top:1412px" width="60" height="18" viewBox="0 0 60 18"><path d="M3 12l5.500-5.500 5.500 5.500" stroke="#fff" stroke-width="1.300" fill="none"/><rect x="29.500" y="3.500" width="13" height="9" fill="none" stroke="#fff"/><path d="M32 15.500h8M36 12.500v3" stroke="#fff"/><rect x="25.500" y="2.500" width="4" height="4" fill="#101010" stroke="#fff"/></svg>
<div style="top:1411px;height:18px;line-height:18px;font-size:12px;white-space:nowrap;color:#ededed;left:2212px;letter-spacing:-.5px;">DEU</div>
<div style="top:1402px;height:18px;line-height:18px;font-size:12px;white-space:nowrap;color:#ededed;left:2234px;width:80px;text-align:center;letter-spacing:-.3px;">11:09</div>
<div style="top:1420px;height:18px;line-height:18px;font-size:12px;white-space:nowrap;color:#ededed;left:2234px;width:80px;text-align:center;letter-spacing:-.3px;">05.01.2026</div>
<svg style="position:absolute;left:2318px;top:1411px" width="20" height="20" viewBox="0 0 20 20"><path d="M1.500 2.500h15v11h-3v3.500l-3.500-3.500h-8.500z" fill="#fff"/><path d="M4 6h10M4 8.500h10M4 11h6" stroke="#101010"/><circle cx="14" cy="14" r="3" fill="#101010" stroke="#fff" stroke-width=".8"/></svg>
<div style="left:2355px;top:1400px;width:1px;height:40px;background:#4a4a4a"></div>
</body></html>
